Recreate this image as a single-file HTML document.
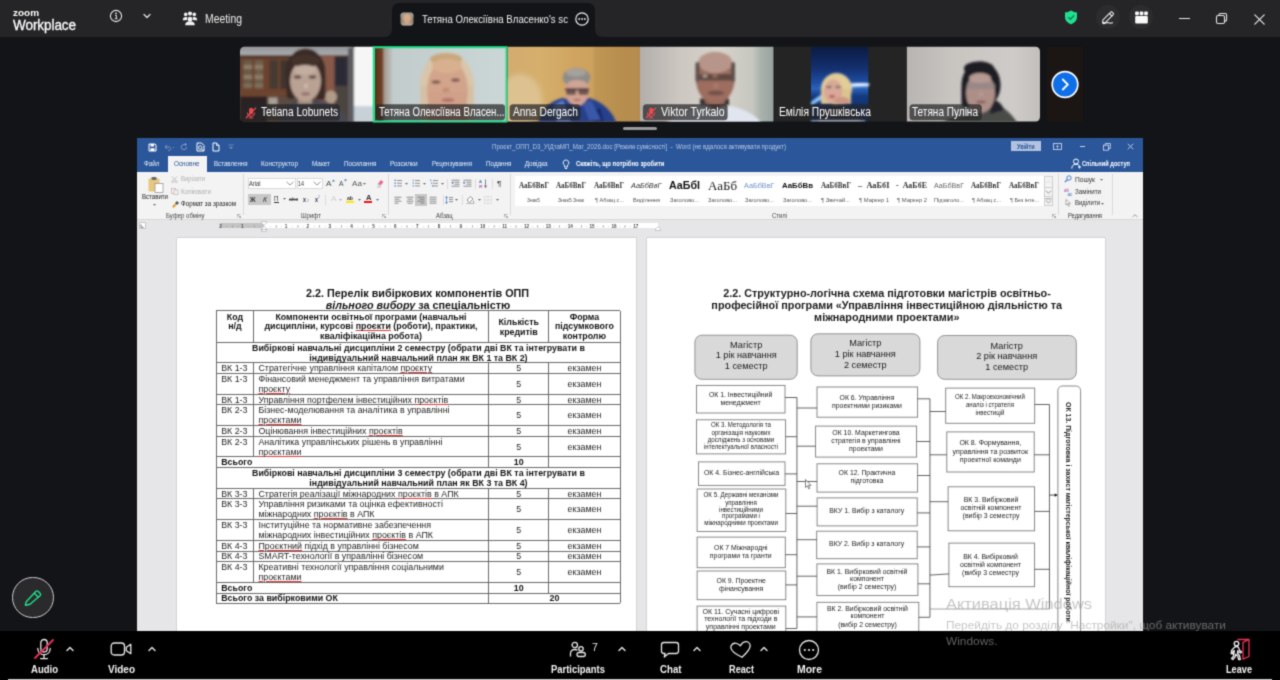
<!DOCTYPE html>
<html><head><meta charset="utf-8">
<style>
*{box-sizing:border-box;margin:0;padding:0}
html,body{width:1280px;height:680px;overflow:hidden;background:#121417;font-family:"Liberation Sans",sans-serif;}
#root{filter:url(#wb);position:relative;width:1280px;height:680px;overflow:hidden;background:#121417}
.abs{position:absolute}
#topbar{position:absolute;left:0;top:0;width:1280px;height:37px;background:#252527}
#bottombar{position:absolute;left:0;top:631px;width:1280px;height:49px;background:#000}
.t{position:absolute;white-space:nowrap;color:#fff;transform-origin:0 50%}
.vl{font-size:12.300px;line-height:15px;color:#fff;letter-spacing:0}
.bl{font-size:11.5px;line-height:14px;font-weight:bold;color:#f4f4f4}
.d{position:absolute;white-space:nowrap}
.d u{text-decoration:underline;text-decoration-color:#e23b3b;text-decoration-thickness:0.700px;text-underline-offset:1px}
.ln{position:absolute;background:#6a6a6a}
.wm{color:rgba(160,160,160,0.600)}
/* word */
#word{position:absolute;left:136.700px;top:138px;width:1006px;height:493px;background:#e6e6e8;overflow:hidden}
#wtitle{position:absolute;left:0;top:0;width:1006px;height:33.500px;background:#2b579a}
#ribbon{position:absolute;left:0;top:33px;width:1006px;height:49.200px;background:#f3f3f3;border-bottom:0.700px solid #d8d8d8}
#ruler{position:absolute;left:0;top:82px;width:1006px;height:13px;background:#e6e6e6}
.page{position:absolute;background:#fff;top:99.500px;height:394px;box-shadow:0 0 0 0.600px #c9c9c9;overflow:hidden}
</style></head><body>
<svg width="0" height="0" style="position:absolute"><filter id="wb" x="0" y="0" width="100%" height="100%" color-interpolation-filters="sRGB"><feConvolveMatrix order="3" kernelMatrix="1 4 1 4 16 4 1 4 1" divisor="36" edgeMode="duplicate" preserveAlpha="true"/></filter></svg>
<div id="root">
<div id="topbar">
 <div class="t" style="transform:scaleX(1.0479);left:13px;top:7.500px;font-size:9.500px;font-weight:bold;line-height:10px">zoom</div>
 <div class="t" style="transform:scaleX(0.9355);left:13px;top:16.5px;font-size:14.5px;line-height:16px;letter-spacing:-0.1px;-webkit-text-stroke:0.3px #fff">Workplace</div>
 <svg class="abs" style="left:108px;top:8px" width="16" height="16" viewBox="0 0 16 16"><circle cx="8" cy="8" r="5.6" fill="none" stroke="#e8e8e8" stroke-width="1.1"/><circle cx="8" cy="5.3" r="0.9" fill="#e8e8e8"/><path d="M7 7.3h1.4v3.2M6.8 10.7h2.6" stroke="#e8e8e8" stroke-width="1" fill="none"/></svg>
 <svg class="abs" style="left:142px;top:11px" width="10" height="10" viewBox="0 0 10 10"><path d="M2 3.5l3 3 3-3" stroke="#e0e0e0" stroke-width="1.3" fill="none" stroke-linecap="round" stroke-linejoin="round"/></svg>
 <svg class="abs" style="left:182px;top:11px" width="16" height="15" viewBox="0 0 16 15"><g fill="#f0f0f0"><circle cx="8" cy="2.6" r="2.1"/><circle cx="3.7" cy="3.4" r="1.8"/><circle cx="12.3" cy="3.4" r="1.8"/><circle cx="8" cy="8.2" r="2.4"/><path d="M3.2 14.3c0-3 2-4 4.8-4s4.800 1 4.800 4z"/><path d="M0.800 9.300c0-2.200 1.200-3.200 3-3.200.7 0 1.200.1 1.700.4-.5.700-.6 1.600-.2 2.500-1 .1-2 .200-4.500.3zM15.200 9.300c0-2.200-1.200-3.200-3-3.200-.7 0-1.200.1-1.700.4.500.7.600 1.600.2 2.500 1 .1 2 .2 4.500.3z"/></g></svg>
 <div class="t" style="transform:scaleX(0.8664);left:205px;top:12px;font-size:12px;line-height:14px;color:#ececec">Meeting</div>
 <div class="abs" style="left:392px;top:2.5px;width:203px;height:35px;background:#121417;border-radius:7px 7px 0 0"></div>
 <svg class="abs" style="left:384px;top:29px" width="219" height="8" viewBox="0 0 219 8"><path d="M0 8C5 8 8 5 8 0V8zM219 8c-5 0-8-3-8-8V8z" fill="#121417"/></svg>
 <svg class="abs" style="left:400px;top:12px" width="14" height="14" viewBox="0 0 14 14"><defs><clipPath id="avc"><rect x="0.500" y="0.500" width="13" height="13" rx="3"/></clipPath><filter id="b1"><feGaussianBlur stdDeviation="0.800"/></filter></defs><g clip-path="url(#avc)"><rect width="14" height="14" fill="#8d8274"/><g filter="url(#b1)"><rect x="0" y="0" width="14" height="5" fill="#9a948c"/><ellipse cx="7" cy="6.500" rx="4" ry="4.500" fill="#d9b48a"/><ellipse cx="7" cy="7.500" rx="2.300" ry="3" fill="#d8a48a"/><rect x="2" y="11" width="10" height="4" fill="#b9a48f"/></g></g></svg>
 <div class="t" style="transform:scaleX(0.8628);left:422px;top:11.500px;font-size:11.200px;line-height:14px;color:#f2f2f2">Тетяна Олексіївна Власенко's sc</div>
 <svg class="abs" style="left:574px;top:10.500px" width="16" height="16" viewBox="0 0 16 16"><circle cx="8" cy="8" r="6.200" fill="none" stroke="#f0f0f0" stroke-width="1.200"/><circle cx="5.200" cy="8" r="0.900" fill="#f0f0f0"/><circle cx="8" cy="8" r="0.900" fill="#f0f0f0"/><circle cx="10.800" cy="8" r="0.900" fill="#f0f0f0"/></svg>
 <svg class="abs" style="left:1064px;top:10px" width="14" height="15" viewBox="0 0 14 15"><path d="M7 0.500c2 1.300 4 1.800 6 1.900v4.600c0 3.500-2.500 5.800-6 7.300C3.500 12.800 1 10.500 1 7V2.400C3 2.300 5 1.800 7 0.500z" fill="#20e090"/><path d="M4.500 7.400l1.900 1.900 3.400-3.600" stroke="#157a52" stroke-width="1.300" fill="none" stroke-linecap="round" stroke-linejoin="round"/></svg>
 <div class="abs" style="left:1096px;top:5px;width:24px;height:24px;border-radius:12px;background:#2c2c2f"></div>
 <svg class="abs" style="left:1100px;top:9px" width="16" height="16" viewBox="0 0 16 16"><g fill="none" stroke="#f0f0f0" stroke-width="1.100" stroke-linejoin="round" stroke-linecap="round"><path d="M3 10.800L10.500 3.300a1.300 1.300 0 0 1 1.900 0l.6.600a1.300 1.300 0 0 1 0 1.900L5.500 13.300 2.600 13.800z"/><path d="M9.400 4.500l2.400 2.400"/><path d="M3 14.500c2 .600 3.500-1.500 5.500-.8s2.500.8 4 0"/></g></svg>
 <div class="abs" style="left:1129px;top:5px;width:24px;height:24px;border-radius:12px;background:#2c2c2f"></div>
 <svg class="abs" style="left:1135px;top:11px" width="13" height="13" viewBox="0 0 13 13"><g fill="#fafafa"><rect x="0.200" y="0.500" width="3.600" height="3.800" rx="0.800"/><rect x="4.700" y="0.500" width="3.600" height="3.800" rx="0.800"/><rect x="9.200" y="0.500" width="3.600" height="3.800" rx="0.800"/><rect x="0.200" y="5" width="12.600" height="7.500" rx="0.900"/></g></svg>
 <div class="abs" style="left:1178.500px;top:18px;width:11px;height:1.300px;background:#e6e6e6"></div>
 <svg class="abs" style="left:1215px;top:12px" width="13" height="13" viewBox="0 0 13 13"><g fill="none" stroke="#e6e6e6" stroke-width="1.100"><rect x="1.500" y="3.500" width="8" height="8" rx="1.500"/><path d="M4 3.500V2.800c0-.8.500-1.300 1.300-1.300h5c.8 0 1.300.5 1.300 1.300v5c0 .8-.5 1.300-1.300 1.300H9.500"/></g></svg>
 <svg class="abs" style="left:1253px;top:12.500px" width="13" height="13" viewBox="0 0 13 13"><path d="M1.800 1.800l9.400 9.400M11.200 1.800l-9.400 9.400" stroke="#e6e6e6" stroke-width="1.200" stroke-linecap="round"/></svg>
</div>
<svg class="abs" style="left:240px;top:46px" width="845" height="78" viewBox="240 46 845 78">
<defs>
<filter id="vb1" x="-10%" y="-10%" width="120%" height="120%"><feGaussianBlur stdDeviation="1.100"/></filter>
<filter id="vb2" x="-10%" y="-10%" width="120%" height="120%"><feGaussianBlur stdDeviation="2.500"/></filter>
<clipPath id="c1"><path d="M244.500 46.800H373V121.600H244.500a4.500 4.500 0 0 1-4.500-4.500V51.300a4.500 4.500 0 0 1 4.500-4.500z"/></clipPath>
<clipPath id="c2"><rect x="375" y="48.300" width="130.500" height="72.200"/></clipPath>
<clipPath id="c3"><rect x="507.600" y="46.800" width="132.400" height="74.800"/></clipPath>
<clipPath id="c4"><rect x="640" y="46.800" width="133.500" height="74.800"/></clipPath>
<clipPath id="c5"><rect x="774.500" y="46.800" width="131.500" height="74.800"/></clipPath>
<clipPath id="c6"><path d="M906.800 46.800H1035.500a4.500 4.500 0 0 1 4.500 4.500V117.100a4.500 4.500 0 0 1-4.500 4.500H906.800z"/></clipPath>
<linearGradient id="g1t" x1="0" y1="0" x2="0" y2="1"><stop offset="0" stop-color="#8a8c90"/><stop offset="1" stop-color="#adaeb0"/></linearGradient>
<linearGradient id="g2" x1="0" x2="1"><stop offset="0" stop-color="#5a2f18"/><stop offset="0.050" stop-color="#6e4128"/><stop offset="0.075" stop-color="#a59a90"/><stop offset="0.140" stop-color="#c2cccc"/><stop offset="1" stop-color="#cbd6d6"/></linearGradient>
<linearGradient id="g3" x1="0" x2="1"><stop offset="0" stop-color="#d2ac70"/><stop offset="0.250" stop-color="#d6af6c"/><stop offset="0.500" stop-color="#cfa460"/><stop offset="0.635" stop-color="#cda25e"/><stop offset="0.660" stop-color="#c09655"/><stop offset="0.850" stop-color="#b88e4e"/><stop offset="1" stop-color="#b58b50"/></linearGradient>
<linearGradient id="g4" x1="0" x2="1"><stop offset="0" stop-color="#b2aeab"/><stop offset="0.300" stop-color="#ccc7c0"/><stop offset="0.600" stop-color="#d6d2ca"/><stop offset="0.840" stop-color="#c6c7c0"/><stop offset="0.900" stop-color="#aab2ac"/><stop offset="1" stop-color="#98a29e"/></linearGradient>
<linearGradient id="g5" x1="0" y1="0" x2="0" y2="1"><stop offset="0" stop-color="#0b1a40"/><stop offset="0.300" stop-color="#143070"/><stop offset="0.480" stop-color="#1e4ea4"/><stop offset="0.560" stop-color="#2a62bc"/><stop offset="0.660" stop-color="#143a80"/><stop offset="1" stop-color="#0f2858"/></linearGradient>
<linearGradient id="g6" x1="0" x2="1"><stop offset="0" stop-color="#b8b4b1"/><stop offset="0.350" stop-color="#c8c4c0"/><stop offset="0.800" stop-color="#cfcbc8"/><stop offset="1" stop-color="#c2bebc"/></linearGradient>
</defs>
<!-- 1 Tetiana Lobunets -->
<g clip-path="url(#c1)">
<rect x="240" y="46" width="134" height="76" fill="#5f3f30"/>
<g filter="url(#vb1)">
<rect x="238" y="44" width="114" height="11.500" fill="url(#g1t)"/>
<rect x="238" y="55.500" width="114" height="3" fill="#4a3026"/>
<rect x="240" y="58" width="52" height="34" fill="#6c432d"/>
<rect x="243.500" y="60" width="8.500" height="29" fill="#6a5a4a"/><rect x="254.500" y="60" width="8.500" height="29" fill="#6e5e4c"/>
<rect x="243.500" y="65" width="19.500" height="4" fill="#8c7d66"/><rect x="243.500" y="75" width="19.500" height="4" fill="#8c7d66"/><rect x="243.500" y="84" width="19.500" height="3" fill="#80725c"/><rect x="252" y="58" width="2.500" height="34" fill="#6c432d"/>
<rect x="269.500" y="60" width="8.500" height="29" fill="#453a32"/><rect x="280.500" y="60" width="8" height="29" fill="#3e342e"/>
<rect x="240" y="92" width="62" height="4.500" fill="#6e452e"/>
<rect x="240" y="96.500" width="27" height="26" fill="#2c2320"/>
<rect x="267" y="96.500" width="34" height="26" fill="#5a4b42"/>
<rect x="268.500" y="97.500" width="9" height="7" fill="#a9a195"/>
<rect x="318" y="56" width="17" height="66" fill="#885848"/>
<rect x="334.500" y="57" width="13" height="29" fill="#2c2a36"/>
<rect x="334.500" y="86" width="13" height="36" fill="#4c4540"/>
<rect x="348" y="48" width="6" height="76" fill="#5c5c60"/>
<rect x="354" y="44" width="21" height="80" fill="#f6f6f6"/>
<rect x="354" y="106" width="21" height="18" fill="#c9d1d8"/>
<path d="M281 123c1-12 5-19 12-21l10-3 18 2c14 2 24 10 27 22z" fill="#464a54"/>
<ellipse cx="331" cy="97" rx="6" ry="6.500" fill="#b19b89"/>
<rect x="298" y="94" width="14" height="10" fill="#a58c7c"/>
<ellipse cx="305.500" cy="72" rx="20" ry="23.500" fill="#3a2b26"/>
<rect x="286.500" y="72" width="9" height="27" rx="4" fill="#3a2b26"/><rect x="316" y="72" width="9.500" height="28" rx="4" fill="#3a2b26"/>
<ellipse cx="305.500" cy="81" rx="15.500" ry="20.500" fill="#b9a193"/>
<ellipse cx="305.500" cy="61" rx="14" ry="6.500" fill="#43322c"/>
<ellipse cx="305" cy="70" rx="11" ry="5" fill="#c3ada0"/>
<ellipse cx="297.500" cy="77" rx="3.800" ry="1.700" fill="#5e4c48"/><ellipse cx="312.500" cy="77" rx="3.800" ry="1.700" fill="#5e4c48"/>
<ellipse cx="306" cy="86" rx="2" ry="2.500" fill="#cdbbb0"/>
<ellipse cx="305.500" cy="94" rx="4.500" ry="1.400" fill="#8d6c68"/>
</g>
</g>
<!-- 2 active speaker -->
<rect x="372.700" y="46.200" width="134.800" height="76.300" fill="#21e08b"/>
<g clip-path="url(#c2)">
<rect x="375" y="48" width="131" height="73" fill="url(#g2)"/>
<g filter="url(#vb1)">
<ellipse cx="447" cy="86" rx="27" ry="33.500" fill="#d9c6aa"/>
<rect x="420.500" y="86" width="53" height="36" fill="#d5c0a4"/>
<ellipse cx="446" cy="59" rx="16" ry="6" fill="#c9a87e"/>
<ellipse cx="447.500" cy="90" rx="20.500" ry="30" fill="#d3a48c"/>
<rect x="428" y="92" width="39" height="30" fill="#d0a088"/>
<ellipse cx="447" cy="66" rx="15" ry="7" fill="#d9b08f"/>
<ellipse cx="436" cy="82" rx="4.500" ry="1.800" fill="#7d5a50"/><ellipse cx="455.500" cy="80" rx="4.500" ry="1.800" fill="#7d5a50"/>
<ellipse cx="446" cy="90" rx="3.500" ry="2.500" fill="#c48d78"/>
<ellipse cx="448" cy="100" rx="6.500" ry="2" fill="#b4736c"/>
</g>
</g>
<!-- 3 Anna Dergach -->
<g clip-path="url(#c3)">
<rect x="507" y="46" width="134" height="76" fill="url(#g3)"/>
<g filter="url(#vb2)"><ellipse cx="520" cy="100" rx="22" ry="26" fill="#dfc598" opacity="0.800"/></g>
<g filter="url(#vb1)">
<path d="M538 124c3-14 10-22 24-26l14 2 14-2c12 4 22 12 27 26z" fill="#27408c"/>
<path d="M553 106l10-6 8 22h-14z" fill="#5c7ecc"/><path d="M600 108l-10 4 4 10h10z" fill="#16286a"/>
<path d="M583 104l8-4 10 20h-12z" fill="#3a58a8"/>
<ellipse cx="577" cy="90" rx="12" ry="16" fill="#d2a293"/>
<ellipse cx="576.500" cy="77.500" rx="13.800" ry="9.500" fill="#8f8c8a"/>
<ellipse cx="576" cy="72.500" rx="10" ry="4" fill="#a5a29e"/>
<ellipse cx="577" cy="84" rx="9.500" ry="4" fill="#cfa596"/>
<rect x="565" y="88.500" width="24" height="1.700" fill="#2a2020"/>
<rect x="566" y="88.500" width="10" height="6.500" rx="2" fill="#4e3c3a" opacity="0.750"/><rect x="578.500" y="88.500" width="10" height="6.500" rx="2" fill="#4e3c3a" opacity="0.750"/>
<ellipse cx="577" cy="100" rx="3.500" ry="1.100" fill="#a8605c"/>
</g>
</g>
<!-- 4 Viktor Tyrkalo -->
<g clip-path="url(#c4)">
<rect x="640" y="46" width="134" height="76" fill="url(#g4)"/>
<g filter="url(#vb1)">
<path d="M664 124c10-8 24-12 36-18l16 3 16-3c12 4 24 8 30 18z" fill="#e0e5ef"/>
<rect x="700" y="98.500" width="29" height="7" fill="#35302f"/>
<path d="M705 103l10 8 10-8v-4h-20z" fill="#8a5e52"/>
<ellipse cx="715.300" cy="78" rx="19.500" ry="26" fill="#9d6d5e"/>
<ellipse cx="715.300" cy="62.500" rx="17" ry="10.500" fill="#b8958a"/>
<rect x="695.500" y="62" width="4" height="20" rx="2" fill="#5c504c"/><rect x="731" y="62" width="4" height="20" rx="2" fill="#5c504c"/>
<rect x="699" y="74" width="33" height="6.500" rx="3" fill="#5e4843"/><rect x="712.500" y="74.500" width="5" height="3" fill="#9a6c5e"/>
<ellipse cx="705" cy="76" rx="2.500" ry="1.500" fill="#a8a898"/>
<ellipse cx="716" cy="86" rx="3" ry="3" fill="#a87868"/>
<ellipse cx="716" cy="93" rx="8.500" ry="2.200" fill="#70504a"/>
</g>
</g>
<!-- 5 Emilia -->
<g clip-path="url(#c5)">
<rect x="773" y="46" width="134" height="76" fill="#242424"/>
<rect x="811" y="46" width="57.300" height="76" fill="url(#g5)"/>
<g filter="url(#vb1)">
<path d="M811 102c14-12 24-14 36-17 8-1.500 14-2 21.300-1.500v3.500c-8-.5-14 0-21 2-12 3-22 8-36.300 17z" fill="#8cc4f4"/>
<ellipse cx="860" cy="84.500" rx="10" ry="1.600" fill="#e8f4ff"/>
<path d="M818 124c0-12 6-18 18-18s24 6 24 18z" fill="#2c2c34"/>
<ellipse cx="836.500" cy="89" rx="15.500" ry="16" fill="#e2cc98"/>
<rect x="821" y="89" width="30" height="15" fill="#dbc48e"/>
<ellipse cx="833" cy="91.500" rx="9.500" ry="12" fill="#d9a898"/>
<ellipse cx="842" cy="101" rx="8" ry="4" fill="#cc9684"/>
<ellipse cx="829" cy="87" rx="3" ry="1.200" fill="#7a6a60"/><ellipse cx="838" cy="87" rx="3" ry="1.200" fill="#6a7a60"/>
<ellipse cx="832" cy="96.500" rx="3" ry="1.300" fill="#b4484a"/>
<rect x="811" y="120" width="54" height="2" fill="#cfd8ea"/>
</g>
</g>
<!-- 6 Tetiana Pulina -->
<g clip-path="url(#c6)">
<rect x="906" y="46" width="135" height="76" fill="url(#g6)"/>
<g filter="url(#vb1)">
<path d="M940 124c8-6 18-8 26-8l24-14c14 4 22 12 28 22z" fill="#484b46"/>
<ellipse cx="981" cy="85" rx="19.500" ry="23.500" fill="#1f1b23"/>
<rect x="961.500" y="85" width="11" height="22" rx="4" fill="#1f1b23"/>
<path d="M992 100c6 0 10 4 12 10l-14 4z" fill="#24222a"/>
<ellipse cx="980.500" cy="93" rx="14.500" ry="20" fill="#ad8f88"/>
<ellipse cx="979" cy="68.500" rx="15" ry="7" fill="#1f1b23"/>
<ellipse cx="980" cy="78" rx="11" ry="5" fill="#b59a92"/>
<rect x="966.500" y="83" width="29" height="6" rx="2.500" fill="#8e8288" opacity="0.650"/>
<ellipse cx="981" cy="94" rx="2.500" ry="2.500" fill="#b89890"/>
<ellipse cx="981" cy="102" rx="5" ry="1.300" fill="#86585a"/>
</g>
</g>
<!-- right nav -->
<rect x="1047" y="46.800" width="36" height="74.800" fill="#1b1613"/>
<circle cx="1065" cy="84.500" r="12.800" fill="#0e6fe8" stroke="#fff" stroke-width="1.700"/>
<path d="M1062.800 79.500l5 5-5 5" fill="none" stroke="#fff" stroke-width="1.800" stroke-linecap="round" stroke-linejoin="round"/>
<!-- labels bg -->
<g fill="#262628" opacity="0.720">
<rect x="243.300" y="104.200" width="96.500" height="16.300" rx="3"/>
<rect x="375.900" y="104.200" width="129.100" height="16.100" rx="3"/>
<rect x="509.600" y="104.200" width="71" height="16" rx="3.500"/>
<rect x="642.900" y="104.200" width="84.700" height="16" rx="3.500"/>
<rect x="775.300" y="104.200" width="98.200" height="16" rx="3.500"/>
<rect x="909.500" y="104.200" width="72.300" height="16" rx="3.500"/>
</g>
</svg>
<!-- muted mic icons -->
<svg class="abs" style="left:244.500px;top:106.500px" width="12" height="12" viewBox="0 0 14 14"><g fill="#ec4a52"><rect x="4.800" y="0.800" width="4.600" height="7.800" rx="2.300"/><path d="M2.800 6.500c0 2.800 1.800 4.200 4.200 4.200s4.200-1.400 4.200-4.200" fill="none" stroke="#ec4a52" stroke-width="1.200"/><rect x="6.400" y="10.500" width="1.300" height="2"/><rect x="4.300" y="12.200" width="5.400" height="1.100"/></g><path d="M1.500 12.500L12.300 1.300" stroke="#ec4a52" stroke-width="1.600" stroke-linecap="round"/></svg>
<svg class="abs" style="left:644.500px;top:106.500px" width="12" height="12" viewBox="0 0 14 14"><g fill="#ec4a52"><rect x="4.800" y="0.800" width="4.600" height="7.800" rx="2.300"/><path d="M2.800 6.500c0 2.800 1.800 4.200 4.200 4.200s4.200-1.400 4.200-4.200" fill="none" stroke="#ec4a52" stroke-width="1.200"/><rect x="6.400" y="10.500" width="1.300" height="2"/><rect x="4.300" y="12.200" width="5.400" height="1.100"/></g><path d="M1.500 12.500L12.300 1.300" stroke="#ec4a52" stroke-width="1.600" stroke-linecap="round"/></svg>
<div class="t vl" style="transform:scaleX(0.8220);left:261px;top:105.300px">Tetiana Lobunets</div>
<div class="t vl" style="transform:scaleX(0.7860);left:379.200px;top:105.300px">Тетяна Олексіївна Власен...</div>
<div class="t vl" style="transform:scaleX(0.8267);left:512.500px;top:105.300px">Anna Dergach</div>
<div class="t vl" style="transform:scaleX(0.8589);left:661px;top:105.300px">Viktor Tyrkalo</div>
<div class="t vl" style="transform:scaleX(0.8327);left:779.200px;top:105.300px">Емілія Прушківська</div>
<div class="t vl" style="transform:scaleX(0.8164);left:912.400px;top:105.300px">Тетяна Пуліна</div>
<div class="abs" style="left:623px;top:127px;width:34px;height:3px;border-radius:1.500px;background:#9a9a9c"></div>

<div id="word">
 <div id="ribbon"></div>
<div id="wtitle">
<svg class="abs" style="left:11.0px;top:4.5px" width="9.0" height="9.0" viewBox="0 0 9 9"><path d="M1 1h6l1 1v6H1z" fill="none" stroke="#fff" stroke-width="1"/><rect x="2.500" y="1" width="3.500" height="2.500" fill="#fff"/><rect x="2.500" y="5.200" width="4" height="2.800" fill="#fff"/></svg>
<svg class="abs" style="left:26.0px;top:5.0px" width="12.0" height="8.0" viewBox="0 0 12 8"><path d="M2 4h4.500a2 2 0 0 1 0 3.500H5M2 4l2-2M2 4l2 2" fill="none" stroke="#7f96c2" stroke-width="1"/><path d="M9.500 4l1 1 1-1z" fill="#7f96c2"/></svg>
<svg class="abs" style="left:43.5px;top:5.0px" width="8.0" height="8.0" viewBox="0 0 8 8"><path d="M6.500 4A2.600 2.600 0 1 1 4 1.500h2M5 0l1.500 1.500L5 3" fill="none" stroke="#7f96c2" stroke-width="1"/></svg>
<svg class="abs" style="left:59.5px;top:4.0px" width="9.0" height="10.0" viewBox="0 0 9 10"><path d="M1 1h4.500L8 3.500V9H1z" fill="none" stroke="#fff" stroke-width="1"/><circle cx="4.200" cy="5.500" r="1.700" fill="none" stroke="#fff" stroke-width="0.900"/><path d="M5.500 6.800l2 2" stroke="#fff" stroke-width="1"/></svg>
<svg class="abs" style="left:75.0px;top:4.0px" width="8.0" height="10.0" viewBox="0 0 8 10"><path d="M1 1h3.500L7 3.500V9H1z" fill="none" stroke="#fff" stroke-width="1"/><path d="M4.500 1v2.500H7" fill="none" stroke="#fff" stroke-width="0.800"/></svg>
<svg class="abs" style="left:91.0px;top:6.0px" width="6.0" height="6.0" viewBox="0 0 6 6"><path d="M0.500 1h5" stroke="#7f96c2" stroke-width="0.800"/><path d="M1 3l2 2 2-2z" fill="#7f96c2"/></svg>
<div class="t" style="transform:scaleX(0.9787);left:355.0px;top:5.0px;font-size:6.3px;line-height:7.6px;color:#b7c6e2;">Проєкт_ОПП_D3_УІДтаМП_Маг_2026.doc [Режим сумісності]&nbsp; -&nbsp; Word (не вдалося активувати продукт)</div>
<div class="abs" style="left:874.5px;top:3.3px;width:29.5px;height:10.0px;background:#b3c3df;"></div>
<div class="t" style="transform:scaleX(0.8696);left:880.5px;top:4.5px;font-size:6.3px;line-height:7.6px;color:#2b579a;font-weight:bold">Увійти</div>
<svg class="abs" style="left:916.5px;top:4.5px" width="9.0" height="8.0" viewBox="0 0 9 8"><rect x="0.500" y="0.500" width="8" height="6" fill="none" stroke="#c5d2ea" stroke-width="0.900"/><path d="M4.500 5.500V2.500M3.200 3.600l1.300-1.300 1.300 1.300" fill="none" stroke="#c5d2ea" stroke-width="0.800"/></svg>
<div class="abs" style="left:943.0px;top:8.3px;width:5.5px;height:0.8px;background:#c5d2ea;"></div>
<svg class="abs" style="left:966.0px;top:4.5px" width="8.0" height="8.0" viewBox="0 0 8 8"><rect x="0.500" y="2.200" width="5" height="5" fill="none" stroke="#c5d2ea" stroke-width="0.900"/><path d="M2.300 2.200V0.500h5v5H5.500" fill="none" stroke="#c5d2ea" stroke-width="0.900"/></svg>
<svg class="abs" style="left:990.5px;top:5.2px" width="7.0" height="7.0" viewBox="0 0 7 7"><path d="M0.800 0.800l5.400 5.400M6.200 0.800L0.800 6.200" stroke="#c5d2ea" stroke-width="0.900"/></svg>
<div class="abs" style="left:31.5px;top:18.0px;width:38.5px;height:16.0px;background:#f3f3f3;"></div>
<div class="t" style="transform:scaleX(0.9861);left:7.5px;top:21.8px;font-size:6.4px;line-height:7.7px;color:#e8eefa;">Файл</div>
<div class="t" style="transform:scaleX(0.9909);left:37.5px;top:21.8px;font-size:6.4px;line-height:7.7px;color:#2b579a;">Основне</div>
<div class="t" style="transform:scaleX(0.9593);left:77.0px;top:21.8px;font-size:6.4px;line-height:7.7px;color:#e8eefa;">Вставлення</div>
<div class="t" style="transform:scaleX(1.0154);left:124.5px;top:21.8px;font-size:6.4px;line-height:7.7px;color:#e8eefa;">Конструктор</div>
<div class="t" style="transform:scaleX(0.9948);left:175.0px;top:21.8px;font-size:6.4px;line-height:7.7px;color:#e8eefa;">Макет</div>
<div class="t" style="transform:scaleX(0.9933);left:207.0px;top:21.8px;font-size:6.4px;line-height:7.7px;color:#e8eefa;">Посилання</div>
<div class="t" style="transform:scaleX(1.0115);left:253.5px;top:21.8px;font-size:6.4px;line-height:7.7px;color:#e8eefa;">Розсилки</div>
<div class="t" style="transform:scaleX(0.9599);left:295.0px;top:21.8px;font-size:6.4px;line-height:7.7px;color:#e8eefa;">Рецензування</div>
<div class="t" style="transform:scaleX(0.9879);left:349.0px;top:21.8px;font-size:6.4px;line-height:7.7px;color:#e8eefa;">Подання</div>
<div class="t" style="transform:scaleX(1.0000);left:388.0px;top:21.8px;font-size:6.4px;line-height:7.7px;color:#e8eefa;">Довідка</div>
<svg class="abs" style="left:425.0px;top:20.5px" width="8.0" height="11.0" viewBox="0 0 8 11"><path d="M4 1a2.800 2.800 0 0 1 1.500 5.200V8h-3V6.200A2.800 2.800 0 0 1 4 1zM2.800 9.500h2.400" fill="none" stroke="#fff" stroke-width="0.900"/></svg>
<div class="t" style="transform:scaleX(0.9307);left:439.0px;top:21.8px;font-size:6.4px;line-height:7.7px;color:#fff;font-weight:bold">Скажіть, що потрібно зробити</div>
<svg class="abs" style="left:934.0px;top:19.5px" width="10.0" height="11.0" viewBox="0 0 10 11"><circle cx="5" cy="3.500" r="2.500" fill="none" stroke="#fff" stroke-width="1"/><path d="M0.800 10.500c0-3 1.800-4.200 4.200-4.200 1.200 0 2.200.4 3 1M7 9h3M8.500 7.500v3" fill="none" stroke="#fff" stroke-width="1"/></svg>
<div class="t" style="transform:scaleX(0.8910);left:945.0px;top:21.8px;font-size:6.4px;line-height:7.7px;color:#fff;font-weight:bold">Спільний доступ</div>
</div>
<svg class="abs" style="left:11.5px;top:38.0px" width="16.0" height="17.0" viewBox="0 0 16 17"><rect x="0.500" y="2.500" width="11" height="13" rx="1" fill="#e8c77e"/><rect x="3.500" y="1" width="5" height="3" rx="0.800" fill="#6a6a6a"/><rect x="7" y="7.500" width="8" height="9" fill="#fff" stroke="#8a8a8a" stroke-width="0.700"/></svg>
<div class="t" style="transform:scaleX(0.9652);left:5.0px;top:55.4px;font-size:6.3px;line-height:7.6px;color:#222;">Вставити</div>
<svg class="abs" style="left:16.0px;top:66.0px" width="3.0" height="2.0" viewBox="0 0 3 2"><path d="M0 0h3L1.500 1.800z" fill="#666"/></svg>
<svg class="abs" style="left:34.0px;top:37.5px" width="7.0" height="7.0" viewBox="0 0 7 7"><path d="M1 0.500l4 4.500M6 0.500L2 5" stroke="#b5b5b5" stroke-width="0.800"/><circle cx="1.700" cy="5.700" r="1" fill="none" stroke="#b5b5b5" stroke-width="0.700"/><circle cx="5.300" cy="5.700" r="1" fill="none" stroke="#b5b5b5" stroke-width="0.700"/></svg>
<div class="t" style="transform:scaleX(0.9493);left:44.0px;top:37.0px;font-size:6.3px;line-height:7.6px;color:#b0b0b0;">Вирізати</div>
<svg class="abs" style="left:34.0px;top:49.5px" width="8.0" height="7.0" viewBox="0 0 8 7"><rect x="0.500" y="0.500" width="4" height="5" fill="none" stroke="#c5aeb0" stroke-width="0.700"/><rect x="3" y="2" width="4" height="4.500" fill="#f3f3f3" stroke="#c5aeb0" stroke-width="0.700"/></svg>
<div class="t" style="transform:scaleX(1.0084);left:44.0px;top:49.5px;font-size:6.3px;line-height:7.6px;color:#b0b0b0;">Копіювати</div>
<svg class="abs" style="left:34.0px;top:61.5px" width="8.0" height="8.0" viewBox="0 0 8 8"><path d="M1 6.500l3-3 1.500 1.500-3 3z" fill="#e0a030"/><path d="M4 3l2-2 2 2-2 2z" fill="#555"/></svg>
<div class="t" style="transform:scaleX(0.9888);left:44.0px;top:61.9px;font-size:6.3px;line-height:7.6px;color:#222;">Формат за зразком</div>
<div class="t" style="transform:scaleX(0.9543);left:29.5px;top:73.9px;font-size:6.3px;line-height:7.6px;color:#444;">Буфер обміну</div>
<svg class="abs" style="left:100.0px;top:76.0px" width="4.0" height="4.0" viewBox="0 0 4 4"><path d="M0.300 0.300v3M0.300 0.300h3M1.500 1.500l2 2M3.700 2v1.700H2" fill="none" stroke="#777" stroke-width="0.600"/></svg>
<div class="abs" style="left:106.3px;top:36.0px;width:0.7px;height:41.0px;background:#d9d9d9;"></div>
<div class="abs" style="left:111.0px;top:39.5px;width:48.0px;height:11.5px;background:#fff;border:0.600px solid #dadada"></div>
<div class="abs" style="left:160.0px;top:39.5px;width:26.0px;height:11.5px;background:#fff;border:0.600px solid #dadada"></div>
<div class="t" style="transform:scaleX(0.9120);left:112.5px;top:41.5px;font-size:6.3px;line-height:7.6px;color:#333;">Arial</div>
<div class="t" style="transform:scaleX(0.8552);left:161.5px;top:41.5px;font-size:6.3px;line-height:7.6px;color:#333;">14</div>
<svg class="abs" style="left:149.5px;top:43.0px" width="8.0" height="5.0" viewBox="0 0 8 5"><path d="M0.500 0.800l3.500 3.200 3.500-3.200" fill="none" stroke="#666" stroke-width="0.700"/></svg>
<svg class="abs" style="left:176.5px;top:43.0px" width="8.0" height="5.0" viewBox="0 0 8 5"><path d="M0.500 0.800l3.500 3.200 3.500-3.200" fill="none" stroke="#666" stroke-width="0.700"/></svg>
<div class="t" style="transform:scaleX(1.0292);left:189.5px;top:41.0px;font-size:8.0px;line-height:9.6px;color:#444;">A</div>
<svg class="abs" style="left:195.0px;top:40.5px" width="3.0" height="3.0" viewBox="0 0 3 3"><path d="M0 2.500L1.500 0.500 3 2.500z" fill="#3b73c4"/></svg>
<div class="t" style="transform:scaleX(1.0360);left:202.5px;top:42.4px;font-size:6.5px;line-height:7.8px;color:#444;">A</div>
<svg class="abs" style="left:207.0px;top:40.5px" width="3.0" height="3.0" viewBox="0 0 3 3"><path d="M0 0.500L1.500 2.500 3 0.500z" fill="#3b73c4"/></svg>
<div class="t" style="transform:scaleX(1.0884);left:215.5px;top:40.8px;font-size:7.5px;line-height:9.0px;color:#555;">Aa</div>
<svg class="abs" style="left:226.0px;top:44.5px" width="3.0" height="2.0" viewBox="0 0 3 2"><path d="M0 0h3L1.500 1.800z" fill="#666"/></svg>
<svg class="abs" style="left:239.0px;top:40.5px" width="8.0" height="9.0" viewBox="0 0 8 9"><path d="M2 4.500L5 1l2.500 2L4.500 6.500z" fill="#e86a8a"/><path d="M1 5.500l1-1 2.500 2-1 1z" fill="#c9c9c9"/><path d="M1 8h4" stroke="#999" stroke-width="0.600"/></svg>
<div class="abs" style="left:111.0px;top:55.5px;width:23.0px;height:11.5px;background:#c8c8c8;"></div>
<div class="t" style="transform:scaleX(0.9644);left:113.5px;top:57.5px;font-size:6.3px;line-height:7.6px;color:#333;font-weight:bold">Ж</div>
<div class="t" style="transform:scaleX(1.0756);left:126.5px;top:57.5px;font-size:6.3px;line-height:7.6px;color:#333;font-style:italic">К</div>
<div class="t" style="transform:scaleX(0.9931);left:137.5px;top:57.2px;font-size:6.3px;line-height:7.6px;color:#333;">П</div>
<div class="abs" style="left:137.3px;top:64.3px;width:5.0px;height:0.6px;background:#333;"></div>
<svg class="abs" style="left:146.8px;top:60.3px" width="3.0" height="2.0" viewBox="0 0 3 2"><path d="M0 0h3L1.500 1.800z" fill="#666"/></svg>
<div class="t" style="transform:scaleX(0.9616);left:152.5px;top:57.8px;font-size:5.8px;line-height:7.0px;color:#444;text-decoration:line-through">abc</div>
<div class="t" style="transform:scaleX(0.8533);left:166.5px;top:57.5px;font-size:6.3px;line-height:7.6px;color:#333;font-weight:bold">x</div>
<div class="t" style="transform:scaleX(0.9216);left:170.0px;top:61.2px;font-size:3.5px;line-height:4.2px;color:#3b73c4;">2</div>
<div class="t" style="transform:scaleX(0.8533);left:178.0px;top:57.5px;font-size:6.3px;line-height:7.6px;color:#333;font-weight:bold">x</div>
<div class="t" style="transform:scaleX(0.9216);left:181.5px;top:56.9px;font-size:3.5px;line-height:4.2px;color:#3b73c4;">2</div>
<div class="abs" style="left:188.8px;top:56.5px;width:0.6px;height:10.0px;background:#dcdcdc;"></div>
<div class="t" style="transform:scaleX(1.0571);left:194.0px;top:56.3px;font-size:7.8px;line-height:9.4px;color:#d0d0d0;">A</div>
<svg class="abs" style="left:202.5px;top:60.5px" width="3.0" height="2.0" viewBox="0 0 3 2"><path d="M0 0h3L1.500 1.800z" fill="#aaa"/></svg>
<div class="t" style="transform:scaleX(0.9697);left:210.0px;top:56.6px;font-size:5.3px;line-height:6.4px;color:#333;font-weight:bold">ab</div>
<div class="abs" style="left:209.5px;top:63.0px;width:8.0px;height:2.0px;background:#ffe800;"></div>
<svg class="abs" style="left:221.0px;top:60.5px" width="3.0" height="2.0" viewBox="0 0 3 2"><path d="M0 0h3L1.500 1.800z" fill="#666"/></svg>
<div class="t" style="transform:scaleX(1.1175);left:229.0px;top:55.9px;font-size:6.8px;line-height:8.2px;color:#333;font-weight:bold">A</div>
<div class="abs" style="left:227.5px;top:63.0px;width:8.0px;height:2.0px;background:#ee1111;"></div>
<svg class="abs" style="left:239.0px;top:60.5px" width="3.0" height="2.0" viewBox="0 0 3 2"><path d="M0 0h3L1.500 1.800z" fill="#666"/></svg>
<div class="t" style="transform:scaleX(0.9653);left:164.5px;top:73.9px;font-size:6.3px;line-height:7.6px;color:#444;">Шрифт</div>
<svg class="abs" style="left:245.5px;top:76.0px" width="4.0" height="4.0" viewBox="0 0 4 4"><path d="M0.300 0.300v3M0.300 0.300h3M1.500 1.500l2 2M3.700 2v1.700H2" fill="none" stroke="#777" stroke-width="0.600"/></svg>
<div class="abs" style="left:251.0px;top:36.0px;width:0.7px;height:41.0px;background:#d9d9d9;"></div>
<svg class="abs" style="left:257.5px;top:41.3px" width="8.0" height="8.0" viewBox="0 0 8 8"><rect x="3" y="1.0" width="5" height="0.700" fill="#666"/><rect x="0.500" y="0.7" width="1.300" height="1.300" fill="#3b73c4"/><rect x="3" y="3.8" width="5" height="0.700" fill="#666"/><rect x="0.500" y="3.5" width="1.300" height="1.300" fill="#3b73c4"/><rect x="3" y="6.6" width="5" height="0.700" fill="#666"/><rect x="0.500" y="6.3" width="1.300" height="1.300" fill="#3b73c4"/></svg>
<svg class="abs" style="left:268.5px;top:44.5px" width="3.0" height="2.0" viewBox="0 0 3 2"><path d="M0 0h3L1.500 1.800z" fill="#666"/></svg>
<svg class="abs" style="left:275.5px;top:41.3px" width="8.0" height="8.0" viewBox="0 0 8 8"><rect x="3" y="1.0" width="5" height="0.700" fill="#666"/><rect x="0.800" y="0.5" width="0.700" height="1.800" fill="#3b73c4"/><rect x="3" y="3.8" width="5" height="0.700" fill="#666"/><rect x="0.800" y="3.3" width="0.700" height="1.800" fill="#3b73c4"/><rect x="3" y="6.6" width="5" height="0.700" fill="#666"/><rect x="0.800" y="6.1" width="0.700" height="1.800" fill="#3b73c4"/></svg>
<svg class="abs" style="left:286.5px;top:44.5px" width="3.0" height="2.0" viewBox="0 0 3 2"><path d="M0 0h3L1.500 1.800z" fill="#666"/></svg>
<svg class="abs" style="left:293.5px;top:41.3px" width="8.0" height="8.0" viewBox="0 0 8 8"><rect x="3" y="1.0" width="5" height="0.700" fill="#666"/><rect x="0.3" y="0.7" width="1" height="1.300" fill="#3b73c4"/><rect x="3" y="3.8" width="5" height="0.700" fill="#666"/><rect x="1.2" y="3.5" width="1" height="1.300" fill="#3b73c4"/><rect x="3" y="6.6" width="5" height="0.700" fill="#666"/><rect x="2.1" y="6.3" width="1" height="1.300" fill="#3b73c4"/></svg>
<svg class="abs" style="left:304.0px;top:44.5px" width="3.0" height="2.0" viewBox="0 0 3 2"><path d="M0 0h3L1.500 1.800z" fill="#666"/></svg>
<div class="abs" style="left:310.5px;top:40.5px;width:0.6px;height:10.0px;background:#dcdcdc;"></div>
<svg class="abs" style="left:314.3px;top:41.3px" width="9.0" height="8.0" viewBox="0 0 9 8"><rect x="0.5" y="0.8" width="8.0" height="0.700" fill="#666"/><rect x="3.5" y="2.8" width="5.0" height="0.700" fill="#666"/><rect x="3.5" y="4.8" width="5.0" height="0.700" fill="#666"/><rect x="0.5" y="6.8" width="8.0" height="0.700" fill="#666"/><path d="M0.300 3.800l2-1.500v3z" fill="#3b73c4"/></svg>
<svg class="abs" style="left:326.0px;top:41.3px" width="9.0" height="8.0" viewBox="0 0 9 8"><rect x="0.5" y="0.8" width="8.0" height="0.700" fill="#666"/><rect x="3.5" y="2.8" width="5.0" height="0.700" fill="#666"/><rect x="3.5" y="4.8" width="5.0" height="0.700" fill="#666"/><rect x="0.5" y="6.8" width="8.0" height="0.700" fill="#666"/><path d="M2.500 3.800l-2-1.500v3z" fill="#3b73c4"/></svg>
<div class="abs" style="left:338.0px;top:40.5px;width:0.6px;height:10.0px;background:#dcdcdc;"></div>
<svg class="abs" style="left:342.5px;top:40.5px" width="9.0" height="10.0" viewBox="0 0 9 10"><text x="0" y="4" font-size="4" font-family="Liberation Sans" fill="#3b73c4" font-weight="bold">A</text><text x="0" y="9" font-size="4" font-family="Liberation Sans" fill="#b04a9a" font-weight="bold">Я</text><path d="M6.500 0.500v8M5 6.500l1.500 2 1.500-2" fill="none" stroke="#555" stroke-width="0.700"/></svg>
<div class="abs" style="left:355.5px;top:40.5px;width:0.6px;height:10.0px;background:#dcdcdc;"></div>
<div class="t" style="transform:scaleX(1.0473);left:360.5px;top:40.5px;font-size:8.0px;line-height:9.6px;color:#444;">¶</div>
<svg class="abs" style="left:257.0px;top:57.5px" width="8.0" height="8.0" viewBox="0 0 8 8"><rect x="0.5" y="0.8" width="7.0" height="0.700" fill="#666"/><rect x="0.5" y="2.8" width="5.0" height="0.700" fill="#666"/><rect x="0.5" y="4.8" width="7.0" height="0.700" fill="#666"/><rect x="0.5" y="6.8" width="4.0" height="0.700" fill="#666"/></svg>
<svg class="abs" style="left:269.0px;top:57.5px" width="8.0" height="8.0" viewBox="0 0 8 8"><rect x="0.5" y="0.8" width="7.0" height="0.700" fill="#666"/><rect x="1.5" y="2.8" width="5.0" height="0.700" fill="#666"/><rect x="0.5" y="4.8" width="7.0" height="0.700" fill="#666"/><rect x="1.5" y="6.8" width="5.0" height="0.700" fill="#666"/></svg>
<div class="abs" style="left:278.5px;top:55.5px;width:12.0px;height:12.0px;background:#c8c8c8;"></div>
<svg class="abs" style="left:280.5px;top:57.5px" width="8.0" height="8.0" viewBox="0 0 8 8"><rect x="0.5" y="0.8" width="7.0" height="0.700" fill="#666"/><rect x="2.5" y="2.8" width="5.0" height="0.700" fill="#666"/><rect x="0.5" y="4.8" width="7.0" height="0.700" fill="#666"/><rect x="3.5" y="6.8" width="4.0" height="0.700" fill="#666"/></svg>
<svg class="abs" style="left:292.5px;top:57.5px" width="8.0" height="8.0" viewBox="0 0 8 8"><rect x="0.5" y="0.8" width="7.0" height="0.700" fill="#666"/><rect x="0.5" y="2.8" width="7.0" height="0.700" fill="#666"/><rect x="0.5" y="4.8" width="7.0" height="0.700" fill="#666"/><rect x="0.5" y="6.8" width="7.0" height="0.700" fill="#666"/></svg>
<div class="abs" style="left:306.0px;top:56.5px;width:0.6px;height:10.0px;background:#dcdcdc;"></div>
<svg class="abs" style="left:308.0px;top:57.5px" width="8.0" height="8.0" viewBox="0 0 8 8"><path d="M1.500 0.500v7M0.300 2l1.200-1.500L2.700 2M0.300 6l1.200 1.500L2.700 6" fill="none" stroke="#3b73c4" stroke-width="0.700"/><rect x="4" y="1" width="4" height="0.700" fill="#666"/><rect x="4" y="3.200" width="4" height="0.700" fill="#666"/><rect x="4" y="5.400" width="4" height="0.700" fill="#666"/></svg>
<svg class="abs" style="left:318.5px;top:60.8px" width="3.0" height="2.0" viewBox="0 0 3 2"><path d="M0 0h3L1.500 1.800z" fill="#666"/></svg>
<div class="abs" style="left:325.5px;top:56.5px;width:0.6px;height:10.0px;background:#dcdcdc;"></div>
<svg class="abs" style="left:329.5px;top:57.0px" width="9.0" height="9.0" viewBox="0 0 9 9"><path d="M1 5l3.500-3.500L7 4 3.500 7.500z" fill="#fff" stroke="#666" stroke-width="0.700"/><path d="M7.500 5.500c.5 1 .8 1.500 0 2-.800-.5-.5-1 0-2z" fill="#3b73c4"/><rect x="0.500" y="7.800" width="8" height="1.200" fill="#bbb"/></svg>
<svg class="abs" style="left:341.5px;top:60.8px" width="3.0" height="2.0" viewBox="0 0 3 2"><path d="M0 0h3L1.500 1.800z" fill="#666"/></svg>
<svg class="abs" style="left:347.5px;top:57.5px" width="8.0" height="8.0" viewBox="0 0 8 8"><rect x="0.500" y="0.500" width="7" height="7" fill="none" stroke="#bbb" stroke-width="0.600" stroke-dasharray="0.800 0.800"/><path d="M4 0.500v7M0.500 4h7" stroke="#bbb" stroke-width="0.600" stroke-dasharray="0.800 0.800"/></svg>
<svg class="abs" style="left:359.0px;top:60.8px" width="3.0" height="2.0" viewBox="0 0 3 2"><path d="M0 0h3L1.500 1.800z" fill="#666"/></svg>
<div class="t" style="transform:scaleX(0.9337);left:299.5px;top:73.9px;font-size:6.3px;line-height:7.6px;color:#444;">Абзац</div>
<svg class="abs" style="left:367.0px;top:76.0px" width="4.0" height="4.0" viewBox="0 0 4 4"><path d="M0.300 0.300v3M0.300 0.300h3M1.500 1.500l2 2M3.700 2v1.700H2" fill="none" stroke="#777" stroke-width="0.600"/></svg>
<div class="abs" style="left:373.0px;top:36.0px;width:0.7px;height:41.0px;background:#d9d9d9;"></div>
<div class="abs" style="left:378.5px;top:38.0px;width:528.5px;height:29.5px;background:#fff;"></div>
<div class="t" style="transform:scaleX(0.8579);left:382.0px;top:43.0px;font-size:8.3px;line-height:10.0px;color:#333;font-family:'Liberation Serif',serif;font-weight:bold">АаБбВвГ</div>
<div class="t" style="transform:scaleX(0.7761);left:390.5px;top:57.8px;font-size:6.2px;line-height:7.4px;color:#555;">Знак5</div>
<div class="t" style="transform:scaleX(0.8579);left:419.5px;top:43.0px;font-size:8.3px;line-height:10.0px;color:#333;font-family:'Liberation Serif',serif;font-weight:bold">АаБбВвГ</div>
<div class="t" style="transform:scaleX(0.8185);left:421.5px;top:57.8px;font-size:6.2px;line-height:7.4px;color:#555;">Знак5 Знак</div>
<div class="t" style="transform:scaleX(0.8579);left:457.5px;top:43.0px;font-size:8.3px;line-height:10.0px;color:#333;font-family:'Liberation Serif',serif;font-weight:bold">АаБбВвГ</div>
<div class="t" style="transform:scaleX(0.8958);left:458.0px;top:57.8px;font-size:6.2px;line-height:7.4px;color:#555;">¶ Абзац с...</div>
<div class="t" style="transform:scaleX(0.9630);left:494.8px;top:43.4px;font-size:7.6px;line-height:9.1px;color:#333;font-style:italic">АаБбВвГ</div>
<div class="t" style="transform:scaleX(0.9057);left:496.5px;top:57.8px;font-size:6.2px;line-height:7.4px;color:#555;">Виділення</div>
<div class="t" style="transform:scaleX(1.0667);left:532.5px;top:42.0px;font-size:10.0px;line-height:12.0px;color:#111;font-weight:bold">АаБбІ</div>
<div class="t" style="transform:scaleX(0.9193);left:533.5px;top:57.8px;font-size:6.2px;line-height:7.4px;color:#555;">Заголово...</div>
<div class="t" style="transform:scaleX(1.1276);left:571.0px;top:41.6px;font-size:11.5px;line-height:13.8px;color:#222;font-family:'Liberation Serif',serif">АаБб</div>
<div class="t" style="transform:scaleX(0.9193);left:571.0px;top:57.8px;font-size:6.2px;line-height:7.4px;color:#555;">Заголово...</div>
<div class="t" style="transform:scaleX(0.9555);left:607.8px;top:43.4px;font-size:7.6px;line-height:9.1px;color:#6f93c6;">АаБбВвГ</div>
<div class="t" style="transform:scaleX(0.9193);left:608.5px;top:57.8px;font-size:6.2px;line-height:7.4px;color:#555;">Заголово...</div>
<div class="t" style="transform:scaleX(0.9773);left:645.5px;top:43.2px;font-size:8.0px;line-height:9.6px;color:#111;font-weight:bold">АаБбВв</div>
<div class="t" style="transform:scaleX(0.9193);left:646.5px;top:57.8px;font-size:6.2px;line-height:7.4px;color:#555;">Заголово...</div>
<div class="t" style="transform:scaleX(0.8579);left:684.0px;top:43.0px;font-size:8.3px;line-height:10.0px;color:#333;font-family:'Liberation Serif',serif;font-weight:bold">АаБбВвГ</div>
<div class="t" style="transform:scaleX(0.9412);left:684.5px;top:57.8px;font-size:6.2px;line-height:7.4px;color:#555;">¶ Звичай...</div>
<div class="t" style="transform:scaleX(1.0095);left:721.2px;top:43.0px;font-size:8.3px;line-height:10.0px;color:#333;font-family:'Liberation Serif',serif;font-weight:bold">–&nbsp; АаБбІ</div>
<div class="t" style="transform:scaleX(0.9384);left:722.0px;top:57.8px;font-size:6.2px;line-height:7.4px;color:#555;">¶ Маркер 1</div>
<div class="t" style="transform:scaleX(0.9650);left:759.5px;top:43.0px;font-size:8.3px;line-height:10.0px;color:#333;font-family:'Liberation Serif',serif;font-weight:bold">-&nbsp; АаБбЕ</div>
<div class="t" style="transform:scaleX(0.9384);left:760.0px;top:57.8px;font-size:6.2px;line-height:7.4px;color:#555;">¶ Маркер 2</div>
<div class="t" style="transform:scaleX(0.9398);left:797.0px;top:43.4px;font-size:7.6px;line-height:9.1px;color:#666;">АаБбВвГ</div>
<div class="t" style="transform:scaleX(0.8976);left:797.0px;top:57.8px;font-size:6.2px;line-height:7.4px;color:#555;">Підзаголо...</div>
<div class="t" style="transform:scaleX(0.8579);left:834.5px;top:43.0px;font-size:8.3px;line-height:10.0px;color:#333;font-family:'Liberation Serif',serif;font-weight:bold">АаБбВвГ</div>
<div class="t" style="transform:scaleX(0.8958);left:835.0px;top:57.8px;font-size:6.2px;line-height:7.4px;color:#555;">¶ Абзац с...</div>
<div class="t" style="transform:scaleX(0.8579);left:872.5px;top:43.0px;font-size:8.3px;line-height:10.0px;color:#333;font-family:'Liberation Serif',serif;font-weight:bold">АаБбВвГ</div>
<div class="t" style="transform:scaleX(0.8755);left:873.0px;top:57.8px;font-size:6.2px;line-height:7.4px;color:#555;">¶ Без інте...</div>
<div class="abs" style="left:907.0px;top:38.0px;width:9.5px;height:29.5px;background:#f3f3f3;border:0.600px solid #cfcfcf"></div>
<div class="abs" style="left:907.0px;top:48.5px;width:9.5px;height:0.6px;background:#cfcfcf;"></div>
<div class="abs" style="left:907.0px;top:58.0px;width:9.5px;height:0.6px;background:#cfcfcf;"></div>
<svg class="abs" style="left:908.5px;top:41.5px" width="7.0" height="4.0" viewBox="0 0 7 4"><path d="M0.800 3.200l2.700-2.500 2.700 2.500" fill="none" stroke="#d5d5d5" stroke-width="0.700"/></svg>
<svg class="abs" style="left:908.5px;top:51.5px" width="7.0" height="4.0" viewBox="0 0 7 4"><path d="M0.800 0.800l2.700 2.500 2.700-2.500" fill="none" stroke="#777" stroke-width="0.700"/></svg>
<svg class="abs" style="left:908.5px;top:59.5px" width="7.0" height="6.0" viewBox="0 0 7 6"><path d="M0.500 0.800h6" stroke="#777" stroke-width="0.700"/><path d="M0.800 2.500l2.700 2.500 2.700-2.500" fill="none" stroke="#777" stroke-width="0.700"/></svg>
<div class="t" style="transform:scaleX(0.9357);left:635.5px;top:73.9px;font-size:6.3px;line-height:7.6px;color:#444;">Стилі</div>
<svg class="abs" style="left:915.5px;top:76.0px" width="4.0" height="4.0" viewBox="0 0 4 4"><path d="M0.300 0.300v3M0.300 0.300h3M1.500 1.500l2 2M3.700 2v1.700H2" fill="none" stroke="#777" stroke-width="0.600"/></svg>
<div class="abs" style="left:921.5px;top:36.0px;width:0.7px;height:41.0px;background:#d9d9d9;"></div>
<svg class="abs" style="left:927.0px;top:37.0px" width="8.0" height="8.0" viewBox="0 0 8 8"><circle cx="5" cy="3" r="2.200" fill="none" stroke="#3b73c4" stroke-width="0.900"/><path d="M3.500 4.500L0.800 7.200" stroke="#3b73c4" stroke-width="1.100"/></svg>
<div class="t" style="transform:scaleX(1.0535);left:938.0px;top:37.5px;font-size:6.3px;line-height:7.6px;color:#333;">Пошук</div>
<svg class="abs" style="left:963.0px;top:40.5px" width="3.0" height="2.0" viewBox="0 0 3 2"><path d="M0 0h3L1.500 1.800z" fill="#666"/></svg>
<svg class="abs" style="left:927.0px;top:49.0px" width="9.0" height="9.0" viewBox="0 0 9 9"><text x="0" y="4.500" font-size="4.500" font-family="Liberation Sans" fill="#a050a0">ab</text><text x="3.500" y="8.500" font-size="4.500" font-family="Liberation Sans" fill="#3b73c4">ac</text></svg>
<div class="t" style="transform:scaleX(0.9835);left:938.0px;top:49.5px;font-size:6.3px;line-height:7.6px;color:#333;">Замінити</div>
<svg class="abs" style="left:928.5px;top:60.5px" width="6.0" height="8.0" viewBox="0 0 6 8"><path d="M1 0.500v5.500l1.500-1.200 1 2.400.9-.4-1-2.300h2z" fill="#fff" stroke="#777" stroke-width="0.600"/></svg>
<div class="t" style="transform:scaleX(0.9473);left:938.0px;top:61.4px;font-size:6.3px;line-height:7.6px;color:#333;">Виділити</div>
<svg class="abs" style="left:964.5px;top:64.5px" width="3.0" height="2.0" viewBox="0 0 3 2"><path d="M0 0h3L1.500 1.800z" fill="#666"/></svg>
<div class="t" style="transform:scaleX(0.9174);left:931.0px;top:73.9px;font-size:6.3px;line-height:7.6px;color:#333;">Редагування</div>
<div class="abs" style="left:975.0px;top:36.0px;width:0.7px;height:41.0px;background:#d9d9d9;"></div>
<svg class="abs" style="left:995.5px;top:76.0px" width="6.0" height="4.0" viewBox="0 0 6 4"><path d="M0.500 3l2.500-2.300L5.500 3" fill="none" stroke="#777" stroke-width="0.700"/></svg>
<div class="abs" style="left:2.0px;top:84.3px;width:7.0px;height:7.0px;background:#fff;border:0.500px solid #c8c8c8"></div>
<svg class="abs" style="left:3.8px;top:86.0px" width="4.0" height="4.0" viewBox="0 0 4 4"><path d="M1 0.500v2.800h2.500" fill="none" stroke="#555" stroke-width="0.800"/></svg>
<div class="abs" style="left:83.0px;top:85.3px;width:44.5px;height:5.0px;background:#c4c4c4;"></div>
<div class="abs" style="left:127.5px;top:85.3px;width:394.0px;height:5.0px;background:#fff;"></div>
<svg class="abs" style="left:83.0px;top:85.5px" width="460.0" height="4.7" viewBox="0 0 460 4.7"><rect x="55.4" y="1.500" width="0.500" height="1.800" fill="#888"/><rect x="77.3" y="1.500" width="0.500" height="1.800" fill="#888"/><rect x="99.1" y="1.500" width="0.500" height="1.800" fill="#888"/><rect x="121.0" y="1.500" width="0.500" height="1.800" fill="#888"/><rect x="142.9" y="1.500" width="0.500" height="1.800" fill="#888"/><rect x="164.7" y="1.500" width="0.500" height="1.800" fill="#888"/><rect x="186.6" y="1.500" width="0.500" height="1.800" fill="#888"/><rect x="208.4" y="1.500" width="0.500" height="1.800" fill="#888"/><rect x="230.3" y="1.500" width="0.500" height="1.800" fill="#888"/><rect x="252.2" y="1.500" width="0.500" height="1.800" fill="#888"/><rect x="274.0" y="1.500" width="0.500" height="1.800" fill="#888"/><rect x="295.9" y="1.500" width="0.500" height="1.800" fill="#888"/><rect x="317.8" y="1.500" width="0.500" height="1.800" fill="#888"/><rect x="339.6" y="1.500" width="0.500" height="1.800" fill="#888"/><rect x="361.5" y="1.500" width="0.500" height="1.800" fill="#888"/><rect x="383.3" y="1.500" width="0.500" height="1.800" fill="#888"/><rect x="405.2" y="1.500" width="0.500" height="1.800" fill="#888"/><rect x="50.0" y="2" width="0.500" height="0.800" fill="#999"/><rect x="55.4" y="1.400" width="0.500" height="2" fill="#888"/><rect x="60.9" y="2" width="0.500" height="0.800" fill="#999"/><rect x="71.8" y="2" width="0.500" height="0.800" fill="#999"/><rect x="77.3" y="1.400" width="0.500" height="2" fill="#888"/><rect x="82.8" y="2" width="0.500" height="0.800" fill="#999"/><rect x="93.7" y="2" width="0.500" height="0.800" fill="#999"/><rect x="99.1" y="1.400" width="0.500" height="2" fill="#888"/><rect x="104.6" y="2" width="0.500" height="0.800" fill="#999"/><rect x="115.5" y="2" width="0.500" height="0.800" fill="#999"/><rect x="121.0" y="1.400" width="0.500" height="2" fill="#888"/><rect x="126.5" y="2" width="0.500" height="0.800" fill="#999"/><rect x="137.4" y="2" width="0.500" height="0.800" fill="#999"/><rect x="142.9" y="1.400" width="0.500" height="2" fill="#888"/><rect x="148.3" y="2" width="0.500" height="0.800" fill="#999"/><rect x="159.3" y="2" width="0.500" height="0.800" fill="#999"/><rect x="164.7" y="1.400" width="0.500" height="2" fill="#888"/><rect x="170.2" y="2" width="0.500" height="0.800" fill="#999"/><rect x="181.1" y="2" width="0.500" height="0.800" fill="#999"/><rect x="186.6" y="1.400" width="0.500" height="2" fill="#888"/><rect x="192.1" y="2" width="0.500" height="0.800" fill="#999"/><rect x="203.0" y="2" width="0.500" height="0.800" fill="#999"/><rect x="208.4" y="1.400" width="0.500" height="2" fill="#888"/><rect x="213.9" y="2" width="0.500" height="0.800" fill="#999"/><rect x="224.8" y="2" width="0.500" height="0.800" fill="#999"/><rect x="230.3" y="1.400" width="0.500" height="2" fill="#888"/><rect x="235.8" y="2" width="0.500" height="0.800" fill="#999"/><rect x="246.7" y="2" width="0.500" height="0.800" fill="#999"/><rect x="252.2" y="1.400" width="0.500" height="2" fill="#888"/><rect x="257.6" y="2" width="0.500" height="0.800" fill="#999"/><rect x="268.6" y="2" width="0.500" height="0.800" fill="#999"/><rect x="274.0" y="1.400" width="0.500" height="2" fill="#888"/><rect x="279.5" y="2" width="0.500" height="0.800" fill="#999"/><rect x="290.4" y="2" width="0.500" height="0.800" fill="#999"/><rect x="295.9" y="1.400" width="0.500" height="2" fill="#888"/><rect x="301.4" y="2" width="0.500" height="0.800" fill="#999"/><rect x="312.3" y="2" width="0.500" height="0.800" fill="#999"/><rect x="317.8" y="1.400" width="0.500" height="2" fill="#888"/><rect x="323.2" y="2" width="0.500" height="0.800" fill="#999"/><rect x="334.1" y="2" width="0.500" height="0.800" fill="#999"/><rect x="339.6" y="1.400" width="0.500" height="2" fill="#888"/><rect x="345.1" y="2" width="0.500" height="0.800" fill="#999"/><rect x="356.0" y="2" width="0.500" height="0.800" fill="#999"/><rect x="361.5" y="1.400" width="0.500" height="2" fill="#888"/><rect x="366.9" y="2" width="0.500" height="0.800" fill="#999"/><rect x="377.9" y="2" width="0.500" height="0.800" fill="#999"/><rect x="383.3" y="1.400" width="0.500" height="2" fill="#888"/><rect x="388.8" y="2" width="0.500" height="0.800" fill="#999"/><rect x="399.7" y="2" width="0.500" height="0.800" fill="#999"/><rect x="405.2" y="1.400" width="0.500" height="2" fill="#888"/><rect x="410.7" y="2" width="0.500" height="0.800" fill="#999"/><rect x="39.0" y="2" width="0.500" height="0.800" fill="#888"/><rect x="33.6" y="1.400" width="0.500" height="2" fill="#777"/><rect x="28.1" y="2" width="0.500" height="0.800" fill="#888"/><rect x="17.2" y="2" width="0.500" height="0.800" fill="#888"/><rect x="11.7" y="1.400" width="0.500" height="2" fill="#777"/><rect x="6.2" y="2" width="0.500" height="0.800" fill="#888"/></svg>
<div class="abs" style="left:145.4px;top:86.0px;width:8px;text-align:center;font-size:4.600px;line-height:5px;color:#4a4a4a;font-weight:bold">1</div>
<div class="abs" style="left:167.2px;top:86.0px;width:8px;text-align:center;font-size:4.600px;line-height:5px;color:#4a4a4a;font-weight:bold">2</div>
<div class="abs" style="left:189.1px;top:86.0px;width:8px;text-align:center;font-size:4.600px;line-height:5px;color:#4a4a4a;font-weight:bold">3</div>
<div class="abs" style="left:210.9px;top:86.0px;width:8px;text-align:center;font-size:4.600px;line-height:5px;color:#4a4a4a;font-weight:bold">4</div>
<div class="abs" style="left:232.8px;top:86.0px;width:8px;text-align:center;font-size:4.600px;line-height:5px;color:#4a4a4a;font-weight:bold">5</div>
<div class="abs" style="left:254.7px;top:86.0px;width:8px;text-align:center;font-size:4.600px;line-height:5px;color:#4a4a4a;font-weight:bold">6</div>
<div class="abs" style="left:276.5px;top:86.0px;width:8px;text-align:center;font-size:4.600px;line-height:5px;color:#4a4a4a;font-weight:bold">7</div>
<div class="abs" style="left:298.4px;top:86.0px;width:8px;text-align:center;font-size:4.600px;line-height:5px;color:#4a4a4a;font-weight:bold">8</div>
<div class="abs" style="left:320.2px;top:86.0px;width:8px;text-align:center;font-size:4.600px;line-height:5px;color:#4a4a4a;font-weight:bold">9</div>
<div class="abs" style="left:342.1px;top:86.0px;width:8px;text-align:center;font-size:4.600px;line-height:5px;color:#4a4a4a;font-weight:bold">10</div>
<div class="abs" style="left:364.0px;top:86.0px;width:8px;text-align:center;font-size:4.600px;line-height:5px;color:#4a4a4a;font-weight:bold">11</div>
<div class="abs" style="left:385.8px;top:86.0px;width:8px;text-align:center;font-size:4.600px;line-height:5px;color:#4a4a4a;font-weight:bold">12</div>
<div class="abs" style="left:407.7px;top:86.0px;width:8px;text-align:center;font-size:4.600px;line-height:5px;color:#4a4a4a;font-weight:bold">13</div>
<div class="abs" style="left:429.5px;top:86.0px;width:8px;text-align:center;font-size:4.600px;line-height:5px;color:#4a4a4a;font-weight:bold">14</div>
<div class="abs" style="left:451.4px;top:86.0px;width:8px;text-align:center;font-size:4.600px;line-height:5px;color:#4a4a4a;font-weight:bold">15</div>
<div class="abs" style="left:473.3px;top:86.0px;width:8px;text-align:center;font-size:4.600px;line-height:5px;color:#4a4a4a;font-weight:bold">16</div>
<div class="abs" style="left:495.1px;top:86.0px;width:8px;text-align:center;font-size:4.600px;line-height:5px;color:#4a4a4a;font-weight:bold">17</div>
<div class="abs" style="left:101.6px;top:86.0px;width:8px;text-align:center;font-size:4.600px;line-height:5px;color:#4a4a4a;font-weight:bold">1</div>
<div class="abs" style="left:79.8px;top:86.0px;width:8px;text-align:center;font-size:4.600px;line-height:5px;color:#4a4a4a;font-weight:bold">2</div>
<svg class="abs" style="left:124.5px;top:83.0px" width="6.0" height="11.0" viewBox="0 0 6 11"><path d="M0.500 0.500h5v1.500L3 4.200 0.500 2z" fill="#fff" stroke="#999" stroke-width="0.500"/><path d="M0.500 7.500L3 5.300 5.500 7.500V8.500h-5z" fill="#fff" stroke="#999" stroke-width="0.500"/><rect x="0.500" y="8.500" width="5" height="2" fill="#fff" stroke="#999" stroke-width="0.500"/></svg>
<svg class="abs" style="left:518.0px;top:87.5px" width="6.0" height="5.0" viewBox="0 0 6 5"><path d="M0.500 4.500V3L3 0.800 5.500 3v1.500z" fill="#fff" stroke="#999" stroke-width="0.500"/></svg>
 <div class="page" id="p1" style="left:40.700px;width:458.500px">
<div class="d" style="left:240.20px;transform:translateX(-50%);top:49.22px;font-size:10.80px;line-height:12.96px;color:#141414;font-weight:bold;">2.2. Перелік вибіркових компонентів ОПП</div>
<div class="d" style="left:240.60px;transform:translateX(-50%);top:61.82px;font-size:10.80px;line-height:12.96px;color:#141414;font-weight:bold;"><i>вільного вибору</i> за спеціальністю</div>
<div class="ln" style="left:39.10px;top:72.80px;width:404.00px;height:0.800px"></div>
<div class="ln" style="left:39.10px;top:104.40px;width:404.00px;height:0.800px"></div>
<div class="ln" style="left:39.10px;top:124.90px;width:404.00px;height:0.800px"></div>
<div class="ln" style="left:39.10px;top:135.40px;width:404.00px;height:0.800px"></div>
<div class="ln" style="left:39.10px;top:156.40px;width:404.00px;height:0.800px"></div>
<div class="ln" style="left:39.10px;top:166.90px;width:404.00px;height:0.800px"></div>
<div class="ln" style="left:39.10px;top:187.90px;width:404.00px;height:0.800px"></div>
<div class="ln" style="left:39.10px;top:198.40px;width:404.00px;height:0.800px"></div>
<div class="ln" style="left:39.10px;top:218.90px;width:404.00px;height:0.800px"></div>
<div class="ln" style="left:39.10px;top:229.40px;width:404.00px;height:0.800px"></div>
<div class="ln" style="left:39.10px;top:250.40px;width:404.00px;height:0.800px"></div>
<div class="ln" style="left:39.10px;top:260.90px;width:404.00px;height:0.800px"></div>
<div class="ln" style="left:39.10px;top:281.60px;width:404.00px;height:0.800px"></div>
<div class="ln" style="left:39.10px;top:302.40px;width:404.00px;height:0.800px"></div>
<div class="ln" style="left:39.10px;top:313.10px;width:404.00px;height:0.800px"></div>
<div class="ln" style="left:39.10px;top:323.60px;width:404.00px;height:0.800px"></div>
<div class="ln" style="left:39.10px;top:344.50px;width:404.00px;height:0.800px"></div>
<div class="ln" style="left:39.10px;top:355.00px;width:404.00px;height:0.800px"></div>
<div class="ln" style="left:39.10px;top:365.50px;width:404.00px;height:0.800px"></div>
<div class="ln" style="left:38.70px;top:73.20px;width:0.800px;height:292.70px"></div>
<div class="ln" style="left:442.70px;top:73.20px;width:0.800px;height:292.70px"></div>
<div class="ln" style="left:75.70px;top:73.20px;width:0.800px;height:31.60px"></div>
<div class="ln" style="left:310.70px;top:73.20px;width:0.800px;height:31.60px"></div>
<div class="ln" style="left:370.60px;top:73.20px;width:0.800px;height:31.60px"></div>
<div class="ln" style="left:75.70px;top:125.30px;width:0.800px;height:94.00px"></div>
<div class="ln" style="left:310.70px;top:125.30px;width:0.800px;height:104.50px"></div>
<div class="ln" style="left:370.60px;top:125.30px;width:0.800px;height:104.50px"></div>
<div class="ln" style="left:75.70px;top:250.80px;width:0.800px;height:94.10px"></div>
<div class="ln" style="left:310.70px;top:250.80px;width:0.800px;height:115.10px"></div>
<div class="ln" style="left:370.60px;top:250.80px;width:0.800px;height:104.60px"></div>
<div class="d" style="left:57.60px;transform:translateX(-50%);top:74.19px;font-size:8.85px;line-height:10.62px;color:#141414;font-weight:bold;">Код</div>
<div class="d" style="left:57.60px;transform:translateX(-50%);top:83.94px;font-size:8.85px;line-height:10.62px;color:#141414;font-weight:bold;">н/д</div>
<div class="d" style="left:193.60px;transform:translateX(-50%);top:74.19px;font-size:8.85px;line-height:10.62px;color:#141414;font-weight:bold;">Компоненти освітньої програми (навчальні</div>
<div class="d" style="left:193.60px;transform:translateX(-50%);top:83.94px;font-size:8.85px;line-height:10.62px;color:#141414;font-weight:bold;">дисципліни, курсові <u>проєкти</u> (роботи), практики,</div>
<div class="d" style="left:193.60px;transform:translateX(-50%);top:93.69px;font-size:8.85px;line-height:10.62px;color:#141414;font-weight:bold;">кваліфікаційна робота)</div>
<div class="d" style="left:341.35px;transform:translateX(-50%);top:79.19px;font-size:8.85px;line-height:10.62px;color:#141414;font-weight:bold;">Кількість</div>
<div class="d" style="left:341.35px;transform:translateX(-50%);top:89.19px;font-size:8.85px;line-height:10.62px;color:#141414;font-weight:bold;">кредитів</div>
<div class="d" style="left:407.05px;transform:translateX(-50%);top:74.19px;font-size:8.85px;line-height:10.62px;color:#141414;font-weight:bold;">Форма</div>
<div class="d" style="left:407.05px;transform:translateX(-50%);top:83.94px;font-size:8.85px;line-height:10.62px;color:#141414;font-weight:bold;">підсумкового</div>
<div class="d" style="left:407.05px;transform:translateX(-50%);top:93.69px;font-size:8.85px;line-height:10.62px;color:#141414;font-weight:bold;">контролю</div>
<div class="d" style="left:241.10px;transform:translateX(-50%);top:105.39px;font-size:8.85px;line-height:10.62px;color:#141414;font-weight:bold;">Вибіркові навчальні дисципліни 2 семестру (обрати дві ВК та інтегрувати в</div>
<div class="d" style="left:241.10px;transform:translateX(-50%);top:115.39px;font-size:8.85px;line-height:10.62px;color:#141414;font-weight:bold;">індивідуальний навчальний план як ВК 1 та ВК 2)</div>
<div class="d" style="left:241.10px;transform:translateX(-50%);top:230.89px;font-size:8.85px;line-height:10.62px;color:#141414;font-weight:bold;">Вибіркові навчальні дисципліни 3 семестру (обрати дві ВК та інтегрувати в</div>
<div class="d" style="left:241.10px;transform:translateX(-50%);top:240.89px;font-size:8.85px;line-height:10.62px;color:#141414;font-weight:bold;">індивідуальний навчальний план як ВК 3 та ВК 4)</div>
<div class="d" style="left:43.80px;top:125.59px;font-size:8.85px;line-height:10.62px;color:#262626;">ВК 1-3</div>
<div class="d" style="left:81.10px;top:125.59px;font-size:8.85px;line-height:10.62px;color:#262626;">Стратегічне управління капіталом <u>проєкту</u></div>
<div class="d" style="left:341.35px;transform:translateX(-50%);top:125.54px;font-size:8.85px;line-height:10.62px;color:#262626;">5</div>
<div class="d" style="left:407.05px;transform:translateX(-50%);top:125.54px;font-size:8.85px;line-height:10.62px;color:#262626;">екзамен</div>
<div class="d" style="left:43.80px;top:136.09px;font-size:8.85px;line-height:10.62px;color:#262626;">ВК 1-3</div>
<div class="d" style="left:81.10px;top:136.09px;font-size:8.85px;line-height:10.62px;color:#262626;">Фінансовий менеджмент та управління витратами</div>
<div class="d" style="left:81.10px;top:146.24px;font-size:8.85px;line-height:10.62px;color:#262626;"><u>проєкту</u></div>
<div class="d" style="left:341.35px;transform:translateX(-50%);top:141.29px;font-size:8.85px;line-height:10.62px;color:#262626;">5</div>
<div class="d" style="left:407.05px;transform:translateX(-50%);top:141.29px;font-size:8.85px;line-height:10.62px;color:#262626;">екзамен</div>
<div class="d" style="left:43.80px;top:157.09px;font-size:8.85px;line-height:10.62px;color:#262626;">ВК 1-3</div>
<div class="d" style="left:81.10px;top:157.09px;font-size:8.85px;line-height:10.62px;color:#262626;">Управління портфелем інвестиційних <u>проєктів</u></div>
<div class="d" style="left:341.35px;transform:translateX(-50%);top:157.04px;font-size:8.85px;line-height:10.62px;color:#262626;">5</div>
<div class="d" style="left:407.05px;transform:translateX(-50%);top:157.04px;font-size:8.85px;line-height:10.62px;color:#262626;">екзамен</div>
<div class="d" style="left:43.80px;top:167.59px;font-size:8.85px;line-height:10.62px;color:#262626;">ВК 2-3</div>
<div class="d" style="left:81.10px;top:167.59px;font-size:8.85px;line-height:10.62px;color:#262626;">Бізнес-моделювання та аналітика в управлінні</div>
<div class="d" style="left:81.10px;top:177.74px;font-size:8.85px;line-height:10.62px;color:#262626;"><u>проєктами</u></div>
<div class="d" style="left:341.35px;transform:translateX(-50%);top:172.79px;font-size:8.85px;line-height:10.62px;color:#262626;">5</div>
<div class="d" style="left:407.05px;transform:translateX(-50%);top:172.79px;font-size:8.85px;line-height:10.62px;color:#262626;">екзамен</div>
<div class="d" style="left:43.80px;top:188.59px;font-size:8.85px;line-height:10.62px;color:#262626;">ВК 2-3</div>
<div class="d" style="left:81.10px;top:188.59px;font-size:8.85px;line-height:10.62px;color:#262626;">Оцінювання інвестиційних <u>проєктів</u></div>
<div class="d" style="left:341.35px;transform:translateX(-50%);top:188.54px;font-size:8.85px;line-height:10.62px;color:#262626;">5</div>
<div class="d" style="left:407.05px;transform:translateX(-50%);top:188.54px;font-size:8.85px;line-height:10.62px;color:#262626;">екзамен</div>
<div class="d" style="left:43.80px;top:199.09px;font-size:8.85px;line-height:10.62px;color:#262626;">ВК 2-3</div>
<div class="d" style="left:81.10px;top:199.09px;font-size:8.85px;line-height:10.62px;color:#262626;">Аналітика управлінських рішень в управлінні</div>
<div class="d" style="left:81.10px;top:209.24px;font-size:8.85px;line-height:10.62px;color:#262626;"><u>проєктами</u></div>
<div class="d" style="left:341.35px;transform:translateX(-50%);top:204.04px;font-size:8.85px;line-height:10.62px;color:#262626;">5</div>
<div class="d" style="left:407.05px;transform:translateX(-50%);top:204.04px;font-size:8.85px;line-height:10.62px;color:#262626;">екзамен</div>
<div class="d" style="left:43.80px;top:251.09px;font-size:8.85px;line-height:10.62px;color:#262626;">ВК 3-3</div>
<div class="d" style="left:81.10px;top:251.09px;font-size:8.85px;line-height:10.62px;color:#262626;">Стратегія реалізації міжнародних <u>проєктів</u> в АПК</div>
<div class="d" style="left:341.35px;transform:translateX(-50%);top:251.04px;font-size:8.85px;line-height:10.62px;color:#262626;">5</div>
<div class="d" style="left:407.05px;transform:translateX(-50%);top:251.04px;font-size:8.85px;line-height:10.62px;color:#262626;">екзамен</div>
<div class="d" style="left:43.80px;top:261.59px;font-size:8.85px;line-height:10.62px;color:#262626;">ВК 3-3</div>
<div class="d" style="left:81.10px;top:261.59px;font-size:8.85px;line-height:10.62px;color:#262626;">Управління ризиками та оцінка ефективності</div>
<div class="d" style="left:81.10px;top:271.74px;font-size:8.85px;line-height:10.62px;color:#262626;">міжнародних <u>проєктів</u> в АПК</div>
<div class="d" style="left:341.35px;transform:translateX(-50%);top:266.64px;font-size:8.85px;line-height:10.62px;color:#262626;">5</div>
<div class="d" style="left:407.05px;transform:translateX(-50%);top:266.64px;font-size:8.85px;line-height:10.62px;color:#262626;">екзамен</div>
<div class="d" style="left:43.80px;top:282.29px;font-size:8.85px;line-height:10.62px;color:#262626;">ВК 3-3</div>
<div class="d" style="left:81.10px;top:282.29px;font-size:8.85px;line-height:10.62px;color:#262626;">Інституційне та нормативне забезпечення</div>
<div class="d" style="left:81.10px;top:292.44px;font-size:8.85px;line-height:10.62px;color:#262626;">міжнародних інвестиційних <u>проєктів</u> в АПК</div>
<div class="d" style="left:341.35px;transform:translateX(-50%);top:287.39px;font-size:8.85px;line-height:10.62px;color:#262626;">5</div>
<div class="d" style="left:407.05px;transform:translateX(-50%);top:287.39px;font-size:8.85px;line-height:10.62px;color:#262626;">екзамен</div>
<div class="d" style="left:43.80px;top:303.09px;font-size:8.85px;line-height:10.62px;color:#262626;">ВК 4-3</div>
<div class="d" style="left:81.10px;top:303.09px;font-size:8.85px;line-height:10.62px;color:#262626;"><u>Проєктний</u> підхід в управлінні бізнесом</div>
<div class="d" style="left:341.35px;transform:translateX(-50%);top:303.14px;font-size:8.85px;line-height:10.62px;color:#262626;">5</div>
<div class="d" style="left:407.05px;transform:translateX(-50%);top:303.14px;font-size:8.85px;line-height:10.62px;color:#262626;">екзамен</div>
<div class="d" style="left:43.80px;top:313.79px;font-size:8.85px;line-height:10.62px;color:#262626;">ВК 4-3</div>
<div class="d" style="left:81.10px;top:313.79px;font-size:8.85px;line-height:10.62px;color:#262626;">SMART-технології в управлінні бізнесом</div>
<div class="d" style="left:341.35px;transform:translateX(-50%);top:313.74px;font-size:8.85px;line-height:10.62px;color:#262626;">5</div>
<div class="d" style="left:407.05px;transform:translateX(-50%);top:313.74px;font-size:8.85px;line-height:10.62px;color:#262626;">екзамен</div>
<div class="d" style="left:43.80px;top:324.29px;font-size:8.85px;line-height:10.62px;color:#262626;">ВК 4-3</div>
<div class="d" style="left:81.10px;top:324.29px;font-size:8.85px;line-height:10.62px;color:#262626;">Креативні технології управління соціальними</div>
<div class="d" style="left:81.10px;top:334.44px;font-size:8.85px;line-height:10.62px;color:#262626;"><u>проєктами</u></div>
<div class="d" style="left:341.35px;transform:translateX(-50%);top:329.44px;font-size:8.85px;line-height:10.62px;color:#262626;">5</div>
<div class="d" style="left:407.05px;transform:translateX(-50%);top:329.44px;font-size:8.85px;line-height:10.62px;color:#262626;">екзамен</div>
<div class="d" style="left:43.80px;top:219.59px;font-size:8.85px;line-height:10.62px;color:#141414;font-weight:bold;">Всього</div>
<div class="d" style="left:341.35px;transform:translateX(-50%);top:219.59px;font-size:8.85px;line-height:10.62px;color:#141414;font-weight:bold;">10</div>
<div class="d" style="left:43.80px;top:345.19px;font-size:8.85px;line-height:10.62px;color:#141414;font-weight:bold;">Всього</div>
<div class="d" style="left:341.35px;transform:translateX(-50%);top:345.19px;font-size:8.85px;line-height:10.62px;color:#141414;font-weight:bold;">10</div>
<div class="d" style="left:43.80px;top:355.69px;font-size:8.85px;line-height:10.62px;color:#141414;font-weight:bold;">Всього за вибірковими ОК</div>
<div class="d" style="left:377.10px;transform:translateX(-50%);top:355.69px;font-size:8.85px;line-height:10.62px;color:#141414;font-weight:bold;">20</div>
 </div>
 <div class="page" id="p2" style="left:510px;width:458px">
<svg class="abs" style="left:0;top:0" width="458" height="394" viewBox="0 0 458 394"><rect x="47.90" y="97.20" width="102.30" height="44.10" rx="7.0" fill="#d9d9d9" stroke="#8a8a8a" stroke-width="0.90"/><rect x="163.90" y="95.80" width="109.00" height="42.10" rx="7.0" fill="#d9d9d9" stroke="#8a8a8a" stroke-width="0.90"/><rect x="290.60" y="97.50" width="138.70" height="43.80" rx="7.0" fill="#d9d9d9" stroke="#8a8a8a" stroke-width="0.90"/><path d="M149.95 159.50 L149.95 390.50" fill="none" stroke="#3c3c3c" stroke-width="0.80"/><path d="M282.95 160.80 L282.95 379.30" fill="none" stroke="#3c3c3c" stroke-width="0.80"/><path d="M402.45 166.50 L402.45 371.00" fill="none" stroke="#3c3c3c" stroke-width="0.80"/><rect x="49.50" y="147.40" width="88.50" height="27.60" rx="0.0" fill="#fff" stroke="#7c7c7c" stroke-width="0.90"/><path d="M138.00 159.50 L149.95 159.50" fill="none" stroke="#3c3c3c" stroke-width="0.80"/><rect x="49.50" y="181.80" width="89.10" height="34.10" rx="0.0" fill="#fff" stroke="#7c7c7c" stroke-width="0.90"/><path d="M138.60 198.70 L149.95 198.70" fill="none" stroke="#3c3c3c" stroke-width="0.80"/><rect x="51.50" y="223.90" width="86.50" height="23.50" rx="0.0" fill="#fff" stroke="#7c7c7c" stroke-width="0.90"/><path d="M138.00 235.90 L149.95 235.90" fill="none" stroke="#3c3c3c" stroke-width="0.80"/><rect x="50.10" y="251.00" width="88.70" height="42.50" rx="0.0" fill="#fff" stroke="#7c7c7c" stroke-width="0.90"/><path d="M138.80 275.50 L149.95 275.50" fill="none" stroke="#3c3c3c" stroke-width="0.80"/><rect x="50.10" y="299.10" width="88.20" height="30.60" rx="0.0" fill="#fff" stroke="#7c7c7c" stroke-width="0.90"/><path d="M138.30 316.70 L149.95 316.70" fill="none" stroke="#3c3c3c" stroke-width="0.80"/><rect x="50.10" y="333.00" width="88.70" height="28.70" rx="0.0" fill="#fff" stroke="#7c7c7c" stroke-width="0.90"/><path d="M138.80 346.90 L149.95 346.90" fill="none" stroke="#3c3c3c" stroke-width="0.80"/><rect x="50.10" y="368.10" width="88.70" height="34.40" rx="0.0" fill="#fff" stroke="#7c7c7c" stroke-width="0.90"/><path d="M138.80 390.50 L149.95 390.50" fill="none" stroke="#3c3c3c" stroke-width="0.80"/><rect x="170.00" y="149.00" width="100.60" height="30.20" rx="0.0" fill="#fff" stroke="#7c7c7c" stroke-width="0.90"/><path d="M149.95 170.00 L170.00 170.00" fill="none" stroke="#3c3c3c" stroke-width="0.80"/><path d="M270.60 160.80 L282.95 160.80" fill="none" stroke="#3c3c3c" stroke-width="0.80"/><rect x="168.60" y="188.10" width="101.00" height="31.00" rx="0.0" fill="#fff" stroke="#7c7c7c" stroke-width="0.90"/><path d="M149.95 208.20 L168.60 208.20" fill="none" stroke="#3c3c3c" stroke-width="0.80"/><path d="M269.60 203.50 L282.95 203.50" fill="none" stroke="#3c3c3c" stroke-width="0.80"/><rect x="170.00" y="225.80" width="100.60" height="28.30" rx="0.0" fill="#fff" stroke="#7c7c7c" stroke-width="0.90"/><path d="M149.95 243.50 L170.00 243.50" fill="none" stroke="#3c3c3c" stroke-width="0.80"/><path d="M270.60 237.50 L282.95 237.50" fill="none" stroke="#3c3c3c" stroke-width="0.80"/><rect x="170.10" y="259.90" width="100.10" height="28.00" rx="0.0" fill="#fff" stroke="#7c7c7c" stroke-width="0.90"/><path d="M149.95 268.20 L170.10 268.20" fill="none" stroke="#3c3c3c" stroke-width="0.80"/><path d="M270.20 274.90 L282.95 274.90" fill="none" stroke="#3c3c3c" stroke-width="0.80"/><rect x="169.70" y="293.20" width="100.50" height="27.50" rx="0.0" fill="#fff" stroke="#7c7c7c" stroke-width="0.90"/><path d="M149.95 301.70 L169.70 301.70" fill="none" stroke="#3c3c3c" stroke-width="0.80"/><path d="M270.20 308.90 L282.95 308.90" fill="none" stroke="#3c3c3c" stroke-width="0.80"/><rect x="169.90" y="325.90" width="101.00" height="31.70" rx="0.0" fill="#fff" stroke="#7c7c7c" stroke-width="0.90"/><path d="M149.95 338.20 L169.90 338.20" fill="none" stroke="#3c3c3c" stroke-width="0.80"/><path d="M270.90 345.80 L282.95 345.80" fill="none" stroke="#3c3c3c" stroke-width="0.80"/><rect x="169.90" y="364.30" width="101.90" height="38.20" rx="0.0" fill="#fff" stroke="#7c7c7c" stroke-width="0.90"/><path d="M149.95 378.90 L169.90 378.90" fill="none" stroke="#3c3c3c" stroke-width="0.80"/><path d="M271.80 379.30 L282.95 379.30" fill="none" stroke="#3c3c3c" stroke-width="0.80"/><rect x="298.70" y="150.10" width="89.00" height="35.20" rx="0.0" fill="#fff" stroke="#7c7c7c" stroke-width="0.90"/><path d="M282.95 173.50 L298.70 173.50" fill="none" stroke="#3c3c3c" stroke-width="0.80"/><path d="M387.70 166.50 L402.45 166.50" fill="none" stroke="#3c3c3c" stroke-width="0.80"/><rect x="299.80" y="193.90" width="87.40" height="40.10" rx="0.0" fill="#fff" stroke="#7c7c7c" stroke-width="0.90"/><path d="M282.95 216.80 L299.80 216.80" fill="none" stroke="#3c3c3c" stroke-width="0.80"/><path d="M387.20 216.80 L402.45 216.80" fill="none" stroke="#3c3c3c" stroke-width="0.80"/><rect x="301.10" y="248.80" width="86.50" height="44.00" rx="0.0" fill="#fff" stroke="#7c7c7c" stroke-width="0.90"/><path d="M282.95 263.70 L301.10 263.70" fill="none" stroke="#3c3c3c" stroke-width="0.80"/><path d="M387.60 273.40 L402.45 273.40" fill="none" stroke="#3c3c3c" stroke-width="0.80"/><rect x="301.90" y="305.10" width="85.70" height="43.60" rx="0.0" fill="#fff" stroke="#7c7c7c" stroke-width="0.90"/><path d="M282.95 337.10 L301.90 335.90" fill="none" stroke="#3c3c3c" stroke-width="0.80"/><path d="M387.60 331.30 L402.45 331.30" fill="none" stroke="#3c3c3c" stroke-width="0.80"/><path d="M282.95 371.00 L402.45 371.00" fill="none" stroke="#8a8a8a" stroke-width="0.80"/><rect x="410.90" y="148.00" width="22.70" height="264.50" rx="4.5" fill="#fff" stroke="#7c7c7c" stroke-width="0.90"/><path d="M402.45 257.10 L408.30 257.10" fill="none" stroke="#222" stroke-width="0.80"/><path d="M410.90 257.10l-3.200 -1.600v3.200z" fill="#111"/></svg>
<div class="d" style="left:240.30px;transform:translateX(-50%);top:49.20px;font-size:10.83px;line-height:13.00px;color:#1c1c1c;font-weight:bold;">2.2. Структурно-логічна схема підготовки магістрів освітньо-</div>
<div class="d" style="left:240.00px;transform:translateX(-50%);top:61.50px;font-size:10.83px;line-height:13.00px;color:#1c1c1c;font-weight:bold;">професійної програми «Управління інвестиційною діяльністю та</div>
<div class="d" style="left:240.10px;transform:translateX(-50%);top:73.80px;font-size:10.83px;line-height:13.00px;color:#1c1c1c;font-weight:bold;">міжнародними проектами»</div>
<div class="d" style="left:99.50px;transform:translateX(-50%);top:102.28px;font-size:9.20px;line-height:11.04px;color:#202020;">Магістр</div>
<div class="d" style="left:99.50px;transform:translateX(-50%);top:112.98px;font-size:9.20px;line-height:11.04px;color:#202020;">1 рік навчання</div>
<div class="d" style="left:99.50px;transform:translateX(-50%);top:123.78px;font-size:9.20px;line-height:11.04px;color:#202020;">1 семестр</div>
<div class="d" style="left:218.60px;transform:translateX(-50%);top:100.98px;font-size:9.20px;line-height:11.04px;color:#202020;">Магістр</div>
<div class="d" style="left:218.60px;transform:translateX(-50%);top:111.58px;font-size:9.20px;line-height:11.04px;color:#202020;">1 рік навчання</div>
<div class="d" style="left:218.60px;transform:translateX(-50%);top:122.38px;font-size:9.20px;line-height:11.04px;color:#202020;">2 семестр</div>
<div class="d" style="left:360.00px;transform:translateX(-50%);top:103.18px;font-size:9.20px;line-height:11.04px;color:#202020;">Магістр</div>
<div class="d" style="left:360.00px;transform:translateX(-50%);top:113.58px;font-size:9.20px;line-height:11.04px;color:#202020;">2 рік навчання</div>
<div class="d" style="left:360.00px;transform:translateX(-50%);top:124.08px;font-size:9.20px;line-height:11.04px;color:#202020;">1 семестр</div>
<div class="d" style="left:93.90px;transform:translateX(-50%);top:153.26px;font-size:6.90px;line-height:8.28px;color:#1e1e1e;">ОК 1. Інвестиційний</div>
<div class="d" style="left:93.90px;transform:translateX(-50%);top:161.46px;font-size:6.90px;line-height:8.28px;color:#1e1e1e;">менеджмент</div>
<div class="d" style="left:94.30px;transform:translateX(-50%) scaleX(0.891);top:183.96px;font-size:6.90px;line-height:8.28px;color:#1e1e1e;">ОК 3. Методологія та</div>
<div class="d" style="left:94.30px;transform:translateX(-50%) scaleX(0.891);top:191.16px;font-size:6.90px;line-height:8.28px;color:#1e1e1e;">організація наукових</div>
<div class="d" style="left:94.30px;transform:translateX(-50%) scaleX(0.891);top:198.46px;font-size:6.90px;line-height:8.28px;color:#1e1e1e;">досліджень з основами</div>
<div class="d" style="left:94.30px;transform:translateX(-50%) scaleX(0.891);top:205.66px;font-size:6.90px;line-height:8.28px;color:#1e1e1e;">інтелектуальної власності</div>
<div class="d" style="left:94.80px;transform:translateX(-50%);top:231.56px;font-size:6.90px;line-height:8.28px;color:#1e1e1e;">ОК 4. Бізнес-англійська</div>
<div class="d" style="left:94.80px;transform:translateX(-50%) scaleX(0.899);top:253.96px;font-size:6.90px;line-height:8.28px;color:#1e1e1e;">ОК 5. Державні механізми</div>
<div class="d" style="left:94.80px;transform:translateX(-50%) scaleX(0.899);top:261.06px;font-size:6.90px;line-height:8.28px;color:#1e1e1e;">управління</div>
<div class="d" style="left:94.80px;transform:translateX(-50%) scaleX(0.899);top:268.06px;font-size:6.90px;line-height:8.28px;color:#1e1e1e;">інвестиційними</div>
<div class="d" style="left:94.80px;transform:translateX(-50%) scaleX(0.899);top:274.96px;font-size:6.90px;line-height:8.28px;color:#1e1e1e;">програмами і</div>
<div class="d" style="left:94.80px;transform:translateX(-50%) scaleX(0.899);top:281.96px;font-size:6.90px;line-height:8.28px;color:#1e1e1e;">міжнародними проектами</div>
<div class="d" style="left:94.10px;transform:translateX(-50%);top:306.06px;font-size:6.90px;line-height:8.28px;color:#1e1e1e;">ОК 7 Міжнародні</div>
<div class="d" style="left:94.10px;transform:translateX(-50%);top:314.36px;font-size:6.90px;line-height:8.28px;color:#1e1e1e;">програми та гранти</div>
<div class="d" style="left:94.50px;transform:translateX(-50%);top:339.36px;font-size:6.90px;line-height:8.28px;color:#1e1e1e;">ОК 9. Проектне</div>
<div class="d" style="left:94.50px;transform:translateX(-50%);top:347.56px;font-size:6.90px;line-height:8.28px;color:#1e1e1e;">фінансування</div>
<div class="d" style="left:94.10px;transform:translateX(-50%);top:370.20px;font-size:7.00px;line-height:8.40px;color:#1e1e1e;">ОК 11. Сучасні цифрові</div>
<div class="d" style="left:94.10px;transform:translateX(-50%);top:377.80px;font-size:7.00px;line-height:8.40px;color:#1e1e1e;">технології та підходи в</div>
<div class="d" style="left:94.10px;transform:translateX(-50%);top:385.30px;font-size:7.00px;line-height:8.40px;color:#1e1e1e;">управлінні проектами</div>
<div class="d" style="left:220.30px;transform:translateX(-50%);top:156.66px;font-size:6.90px;line-height:8.28px;color:#1e1e1e;">ОК 6. Управління</div>
<div class="d" style="left:220.30px;transform:translateX(-50%);top:164.46px;font-size:6.90px;line-height:8.28px;color:#1e1e1e;">проектними ризиками</div>
<div class="d" style="left:219.30px;transform:translateX(-50%);top:191.16px;font-size:6.90px;line-height:8.28px;color:#1e1e1e;">ОК 10. Маркетингова</div>
<div class="d" style="left:219.30px;transform:translateX(-50%);top:199.36px;font-size:6.90px;line-height:8.28px;color:#1e1e1e;">стратегія в управлінні</div>
<div class="d" style="left:219.30px;transform:translateX(-50%);top:207.36px;font-size:6.90px;line-height:8.28px;color:#1e1e1e;">проектами</div>
<div class="d" style="left:220.30px;transform:translateX(-50%);top:231.76px;font-size:6.90px;line-height:8.28px;color:#1e1e1e;">ОК 12. Практична</div>
<div class="d" style="left:220.30px;transform:translateX(-50%);top:239.96px;font-size:6.90px;line-height:8.28px;color:#1e1e1e;">підготовка</div>
<div class="d" style="left:220.10px;transform:translateX(-50%);top:269.66px;font-size:6.90px;line-height:8.28px;color:#1e1e1e;">ВКУ 1. Вибір з каталогу</div>
<div class="d" style="left:219.90px;transform:translateX(-50%);top:302.76px;font-size:6.90px;line-height:8.28px;color:#1e1e1e;">ВКУ 2. Вибір з каталогу</div>
<div class="d" style="left:220.30px;transform:translateX(-50%);top:330.06px;font-size:6.90px;line-height:8.28px;color:#1e1e1e;">ВК 1. Вибірковий освітній</div>
<div class="d" style="left:220.30px;transform:translateX(-50%);top:337.66px;font-size:6.90px;line-height:8.28px;color:#1e1e1e;">компонент</div>
<div class="d" style="left:220.30px;transform:translateX(-50%);top:345.66px;font-size:6.90px;line-height:8.28px;color:#1e1e1e;">(вибір 2 семестру)</div>
<div class="d" style="left:220.80px;transform:translateX(-50%);top:367.36px;font-size:6.90px;line-height:8.28px;color:#1e1e1e;">ВК 2. Вибірковий освітній</div>
<div class="d" style="left:220.80px;transform:translateX(-50%);top:374.96px;font-size:6.90px;line-height:8.28px;color:#1e1e1e;">компонент</div>
<div class="d" style="left:220.80px;transform:translateX(-50%);top:383.66px;font-size:6.90px;line-height:8.28px;color:#1e1e1e;">(вибір 2 семестру)</div>
<div class="d" style="left:343.20px;transform:translateX(-50%) scaleX(0.884);top:155.96px;font-size:6.90px;line-height:8.28px;color:#1e1e1e;">ОК 2. Макроекономічний</div>
<div class="d" style="left:343.20px;transform:translateX(-50%) scaleX(0.884);top:163.86px;font-size:6.90px;line-height:8.28px;color:#1e1e1e;">аналіз і стратегія</div>
<div class="d" style="left:343.20px;transform:translateX(-50%) scaleX(0.884);top:171.16px;font-size:6.90px;line-height:8.28px;color:#1e1e1e;">інвестицій</div>
<div class="d" style="left:343.60px;transform:translateX(-50%);top:201.70px;font-size:7.00px;line-height:8.40px;color:#1e1e1e;">ОК 8. Формування,</div>
<div class="d" style="left:343.60px;transform:translateX(-50%);top:210.60px;font-size:7.00px;line-height:8.40px;color:#1e1e1e;">управління та розвиток</div>
<div class="d" style="left:343.60px;transform:translateX(-50%);top:218.50px;font-size:7.00px;line-height:8.40px;color:#1e1e1e;">проектної команди</div>
<div class="d" style="left:344.30px;transform:translateX(-50%);top:258.94px;font-size:6.94px;line-height:8.33px;color:#1e1e1e;">ВК 3. Вибірковий</div>
<div class="d" style="left:344.30px;transform:translateX(-50%);top:266.94px;font-size:6.94px;line-height:8.33px;color:#1e1e1e;">освітній компонент</div>
<div class="d" style="left:344.30px;transform:translateX(-50%);top:274.74px;font-size:6.94px;line-height:8.33px;color:#1e1e1e;">(вибір 3 семестру</div>
<div class="d" style="left:343.80px;transform:translateX(-50%);top:315.04px;font-size:6.94px;line-height:8.33px;color:#1e1e1e;">ВК 4. Вибірковий</div>
<div class="d" style="left:343.80px;transform:translateX(-50%);top:323.24px;font-size:6.94px;line-height:8.33px;color:#1e1e1e;">освітній компонент</div>
<div class="d" style="left:343.80px;transform:translateX(-50%);top:331.14px;font-size:6.94px;line-height:8.33px;color:#1e1e1e;">(вибір 3 семестру</div>
<div class="d" style="left:425.60px;top:164.30px;font-size:6.950px;line-height:8px;font-weight:bold;color:#222;transform-origin:0 0;transform:rotate(90deg)">ОК 13. Підготовка і захист магістерської кваліфікаційної роботи</div>
<svg class="abs" style="left:158.80px;top:241.00px" width="7" height="11" viewBox="0 0 7 11"><path d="M0.500 0.500v8l1.900-1.700 1.300 3 1.100-.5-1.300-2.900h2.500z" fill="#fff" stroke="#333" stroke-width="0.600"/></svg>
 </div>
</div>
<div id="bottombar">
<div class="abs" style="left:8px;top:48px;width:1264px;height:1px;background:#cfcfcf"></div>
<!-- audio -->
<svg class="abs" style="left:32px;top:6px" width="24" height="26" viewBox="0 0 24 26"><g fill="none" stroke="#e8e8e8" stroke-width="1.300" stroke-linecap="round"><rect x="8.800" y="2.500" width="6.400" height="12.500" rx="3.200"/><path d="M5.800 11.500c0 4 2.700 6.300 6.200 6.300s6.200-2.300 6.200-6.300"/><path d="M12 17.800v3.700M8.500 21.600h7"/></g><path d="M3 21L21 3" stroke="#f0325a" stroke-width="1.800" stroke-linecap="round"/></svg>
<svg class="abs" style="left:64px;top:13px" width="12" height="10" viewBox="0 0 12 10"><path d="M3 6.500l3-3 3 3" fill="none" stroke="#e8e8e8" stroke-width="1.400" stroke-linecap="round" stroke-linejoin="round"/></svg>
<div class="t bl" style="transform:scaleX(0.8288);left:30.500px;top:31px">Audio</div>
<!-- video -->
<svg class="abs" style="left:110px;top:10px" width="24" height="16" viewBox="0 0 24 16"><g fill="none" stroke="#e8e8e8" stroke-width="1.300" stroke-linejoin="round"><rect x="1.200" y="2" width="13.300" height="12" rx="3"/><path d="M16.300 6.300l4.500-3v9.400l-4.500-3z"/></g></svg>
<svg class="abs" style="left:146px;top:13px" width="12" height="10" viewBox="0 0 12 10"><path d="M3 6.500l3-3 3 3" fill="none" stroke="#e8e8e8" stroke-width="1.400" stroke-linecap="round" stroke-linejoin="round"/></svg>
<div class="t bl" style="transform:scaleX(0.8679);left:108px;top:31px">Video</div>
<!-- participants -->
<svg class="abs" style="left:569px;top:10px" width="18" height="17" viewBox="0 0 18 17"><g fill="none" stroke="#e8e8e8" stroke-width="1.300"><circle cx="5.800" cy="4" r="2.700"/><path d="M1.500 15.500v-3c0-2.600 1.800-4 4.300-4 1 0 2 .3 2.700.8"/><circle cx="12" cy="7.800" r="2.200"/><rect x="8" y="11.500" width="8.300" height="4" rx="2"/></g></svg>
<div class="t" style="left:592px;top:10px;font-size:10.500px;line-height:12px;color:#e8e8e8">7</div>
<svg class="abs" style="left:616px;top:13px" width="12" height="10" viewBox="0 0 12 10"><path d="M3 6.500l3-3 3 3" fill="none" stroke="#e8e8e8" stroke-width="1.400" stroke-linecap="round" stroke-linejoin="round"/></svg>
<div class="t bl" style="transform:scaleX(0.8203);left:551px;top:31px">Participants</div>
<!-- chat -->
<svg class="abs" style="left:660px;top:10px" width="20" height="18" viewBox="0 0 20 18"><path d="M3.800 1.500h12.400a2.300 2.300 0 0 1 2.300 2.300v6.400a2.300 2.300 0 0 1-2.300 2.300H8.500L4.300 16l.8-3.500H3.800a2.300 2.300 0 0 1-2.300-2.300V3.800a2.300 2.300 0 0 1 2.300-2.300z" fill="none" stroke="#e8e8e8" stroke-width="1.300" stroke-linejoin="round"/></svg>
<svg class="abs" style="left:691px;top:13px" width="12" height="10" viewBox="0 0 12 10"><path d="M3 6.500l3-3 3 3" fill="none" stroke="#e8e8e8" stroke-width="1.400" stroke-linecap="round" stroke-linejoin="round"/></svg>
<div class="t bl" style="transform:scaleX(0.8411);left:660px;top:31px">Chat</div>
<!-- react -->
<svg class="abs" style="left:730px;top:10px" width="22" height="18" viewBox="0 0 22 18"><path d="M11 16.300C6 13 1.300 9.600 1.300 5.600 1.300 3.200 3.200 1.400 5.500 1.400c2 0 3.800 1.300 5.500 3.300 1.700-2 3.500-3.300 5.500-3.300 2.300 0 4.200 1.800 4.200 4.200 0 4-4.700 7.400-9.700 10.700z" fill="none" stroke="#e8e8e8" stroke-width="1.300" stroke-linejoin="round" transform="rotate(-8 11 9)"/></svg>
<svg class="abs" style="left:758px;top:13px" width="12" height="10" viewBox="0 0 12 10"><path d="M3 6.500l3-3 3 3" fill="none" stroke="#e8e8e8" stroke-width="1.400" stroke-linecap="round" stroke-linejoin="round"/></svg>
<div class="t bl" style="transform:scaleX(0.7980);left:728.500px;top:31px">React</div>
<!-- more -->
<svg class="abs" style="left:798px;top:7.500px" width="22" height="22" viewBox="0 0 22 22"><circle cx="11" cy="11" r="9.500" fill="none" stroke="#e8e8e8" stroke-width="1.300"/><circle cx="6.800" cy="11" r="1.100" fill="#e8e8e8"/><circle cx="11" cy="11" r="1.100" fill="#e8e8e8"/><circle cx="15.200" cy="11" r="1.100" fill="#e8e8e8"/></svg>
<div class="t bl" style="transform:scaleX(0.9096);left:796.500px;top:31px">More</div>
<!-- leave -->
<svg class="abs" style="left:1228px;top:7px" width="24" height="24" viewBox="0 0 24 24"><path d="M9.500 1.500h11.500v17l-6 2.700V4.300l6-2.800" fill="none" stroke="#f0325a" stroke-width="1.300" stroke-linejoin="round"/><g fill="none" stroke="#f2f2f2" stroke-width="1.300" stroke-linejoin="round" stroke-linecap="round"><circle cx="8.500" cy="5.600" r="2.300"/><path d="M6.500 9.200c1.300-.8 3-.8 4 .2l1 3 2 1.300-.7 1.300-2.500-1.300-.5-1 -.3 2.500 2 2.300.8 4h-1.700l-.8-3.300-2-2-.8 2.800-2.200 2.600-1.300-1 2-2.500.8-5.500-1.300.8-.4 2.400-1.500-.2.500-3.200z"/></g></svg>
<div class="t bl" style="transform:scaleX(0.7973);left:1226px;top:31px">Leave</div>
</div>
<!-- pencil FAB -->
<div class="abs" style="left:12.100px;top:576.600px;width:41.600px;height:41.600px;border-radius:21px;border:1.600px solid #cfcfd2;background:#2a2a2d"></div>
<svg class="abs" style="left:22.500px;top:587px" width="21" height="21" viewBox="0 0 21 21"><g fill="none" stroke="#1fe08a" stroke-width="1.400" stroke-linejoin="round" stroke-linecap="round"><path d="M3.500 14.500L13 4.300a1.400 1.400 0 0 1 2 0l2.200 2.200a1.400 1.400 0 0 1 0 2L7 17.300 3 18.300a.600.600 0 0 1-.6-.8z"/><path d="M11.300 6.200l4 4"/></g></svg>

<div class="t wm" style="transform:scaleX(1.1194);left:946.400px;top:595.900px;font-size:14.700px;line-height:17.600px">Активація Windows</div>
<div class="t wm" style="transform:scaleX(1.0885);left:946.400px;top:618.800px;font-size:10.900px;line-height:13px">Перейдіть до розділу "Настройки", щоб активувати</div>
<div class="t wm" style="transform:scaleX(1.0907);left:946px;top:634.500px;font-size:10.900px;line-height:13px">Windows.</div>
</div>
</body></html>
